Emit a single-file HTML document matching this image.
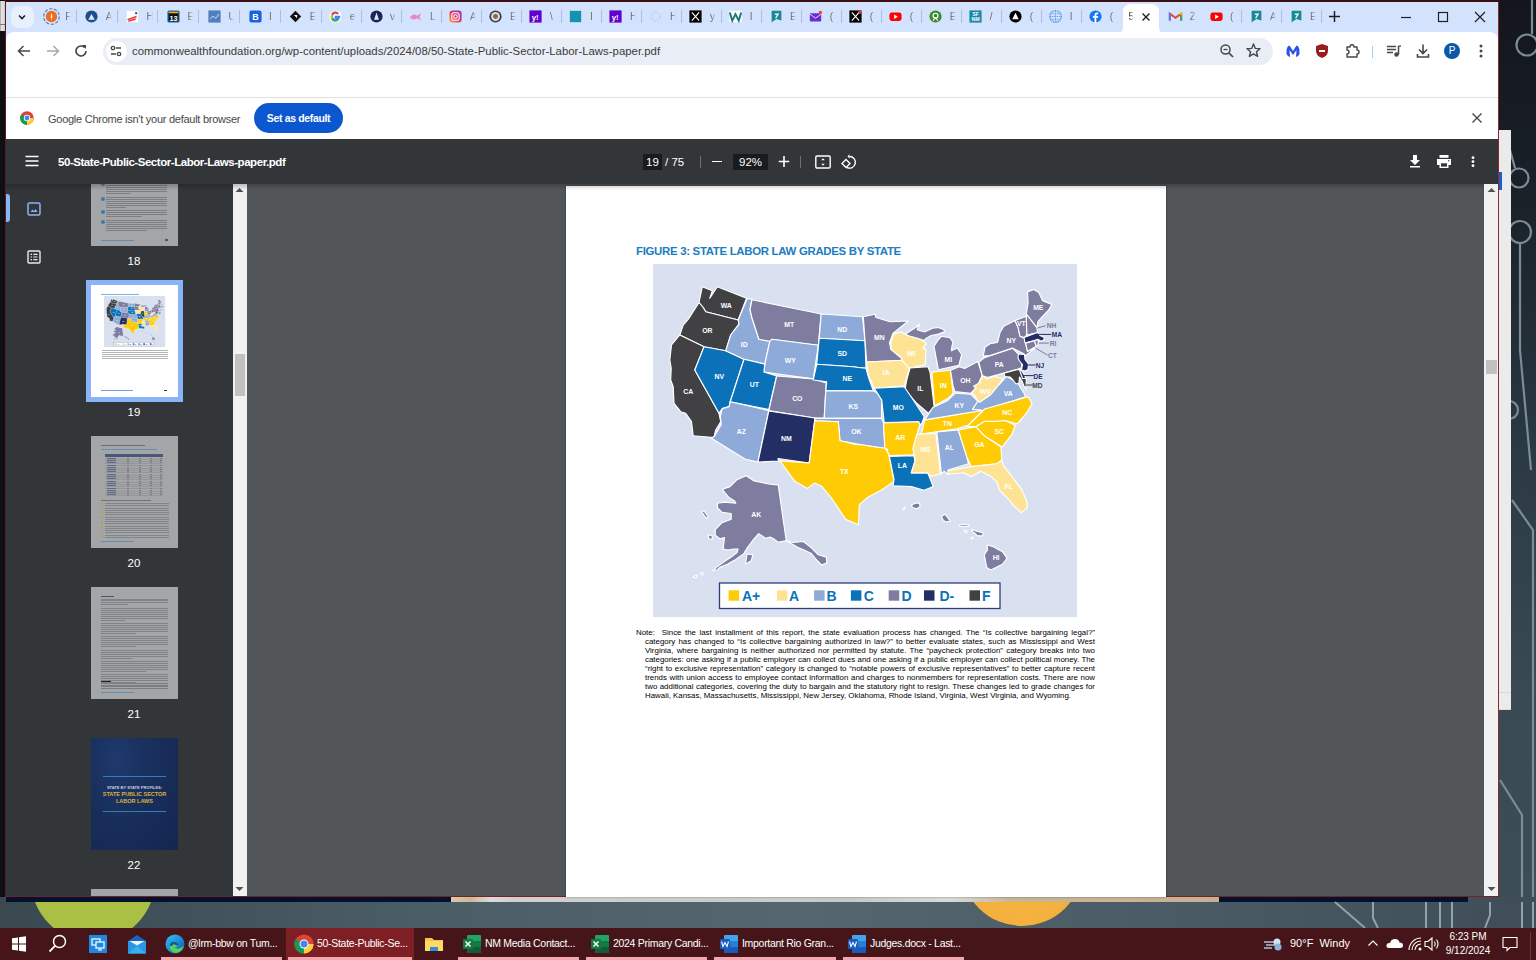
<!DOCTYPE html>
<html><head><meta charset="utf-8">
<style>
*{margin:0;padding:0;box-sizing:border-box}
html,body{width:1536px;height:960px;overflow:hidden;background:#3c4b55;font-family:"Liberation Sans",sans-serif}
.a{position:absolute}
svg.a{overflow:visible}
</style></head><body>
<svg width="0" height="0" style="position:absolute"><defs><symbol id="mapsym" viewBox="653 264 424 353">
<rect x="653" y="264" width="424" height="353" fill="#d9e1f1"/>
<g stroke="#fff" stroke-width="1.15" stroke-linejoin="round">
<path d="M702.3 286.7 L712.3 290.8 L709.8 298.3 L717.3 286.7 L746.5 298.3 L738.2 320.0 L705.7 311.7 L703.2 307.5 L699.0 302.5 Z" fill="#414143"/>
<path d="M699.0 302.5 L703.2 307.5 L705.7 311.7 L738.2 320.0 L739.0 324.2 L730.7 335.0 L725.7 350.8 L704.0 346.7 L679.8 335.0 L683.2 325.0 L689.0 318.3 Z" fill="#414143"/>
<path d="M679.8 335.0 L704.0 346.7 L694.8 370.0 L719.0 413.3 L720.7 421.7 L715.7 430.0 L714.0 437.5 L693.2 435.8 L691.5 421.7 L685.7 413.3 L680.7 411.7 L674.0 403.3 L673.2 386.7 L670.7 380.0 L671.2 368.0 L669.8 360.0 L671.5 345.0 Z" fill="#414143"/>
<path d="M704.0 346.7 L725.7 350.8 L744.0 359.2 L730.2 401.7 L729.2 406.6 L722.3 408.6 L719.0 413.3 L694.8 370.0 Z" fill="#0b72ba"/>
<path d="M747.0 298.8 L752.0 298.8 L750.0 309.7 L752.0 318.0 L758.9 339.3 L769.8 341.3 L764.8 364.1 L744.0 359.2 L725.7 350.8 L730.7 335.0 L739.0 324.2 L738.2 320.0 Z" fill="#8eaad8"/>
<path d="M752.0 299.8 L821.2 314.0 L818.3 345.3 L771.8 339.3 L769.8 341.3 L758.9 339.3 L752.0 318.0 L750.0 309.7 Z" fill="#7e7c9f"/>
<path d="M769.8 341.3 L771.8 339.3 L818.3 345.3 L813.3 378.9 L763.9 372.0 L764.8 364.1 Z" fill="#8eaad8"/>
<path d="M744.0 359.2 L764.8 364.1 L763.9 372.0 L776.7 376.0 L768.8 409.6 L730.2 401.7 Z" fill="#0b72ba"/>
<path d="M776.7 376.0 L813.3 378.9 L826.2 382.9 L824.2 418.0 L815.0 418.0 L768.8 410.6 Z" fill="#7e7c9f"/>
<path d="M730.2 401.7 L768.8 410.6 L757.9 462.0 L745.0 459.0 L711.4 438.3 L714.4 436.3 L721.3 424.4 L720.3 416.5 L722.3 408.6 L729.2 406.6 Z" fill="#8eaad8"/>
<path d="M768.8 411.0 L815.0 418.0 L809.2 463.0 L778.0 458.5 L778.5 461.0 L758.0 462.0 Z" fill="#232e65"/>
<path d="M821.2 314.0 L862.5 316.7 L865.0 340.8 L819.2 338.3 Z" fill="#8eaad8"/>
<path d="M819.2 338.3 L865.0 340.8 L865.8 363.3 L866.0 368.0 L858.3 367.5 L853.3 366.7 L816.7 364.2 Z" fill="#0b72ba"/>
<path d="M816.7 364.2 L853.3 366.7 L858.3 367.5 L866.0 368.3 L868.3 376.7 L873.3 390.8 L825.8 390.8 L826.7 381.7 L813.3 380.0 Z" fill="#0b72ba"/>
<path d="M825.8 390.8 L873.3 390.8 L877.5 393.3 L881.7 400.0 L881.5 418.3 L824.2 418.3 Z" fill="#8eaad8"/>
<path d="M815.0 418.3 L881.5 418.3 L883.5 423.0 L884.9 448.3 L863.3 445.0 L840.0 440.8 L838.3 421.7 L815.0 420.8 Z" fill="#8eaad8"/>
<path d="M814.7 420.8 L838.3 421.7 L840.0 440.8 L848.0 442.5 L855.0 444.5 L863.3 445.0 L872.0 446.5 L884.9 448.3 L887.6 451.9 L889.4 457.4 L894.0 481.1 L884.0 488.4 L867.5 497.5 L859.3 504.8 L858.4 524.8 L845.7 519.4 L831.1 497.5 L822.0 486.6 L814.7 482.9 L807.4 488.4 L794.6 481.1 L780.0 461.0 L809.2 462.9 Z" fill="#ffcb05"/>
<path d="M863.3 316.7 L875.0 314.2 L876.0 317.5 L890.0 321.7 L908.4 321.0 L893.1 333.3 L889.5 342.8 L890.9 349.4 L901.2 358.1 L901.9 360.3 L866.7 362.0 L865.0 340.8 Z" fill="#7e7c9f"/>
<path d="M890.9 342.1 L893.5 334.1 L901.2 331.9 L907.0 335.2 L920.8 339.2 L923.8 341.4 L926.7 343.6 L923.0 347.9 L926.0 349.4 L925.2 364.7 L909.2 368.4 L903.3 362.5 L901.2 357.4 L890.9 349.4 Z" fill="#fee394"/>
<path d="M866.7 362.0 L901.9 360.3 L909.2 368.4 L906.7 378.3 L904.2 385.8 L874.2 388.3 L868.3 375.0 Z" fill="#fee394"/>
<path d="M910.0 368.0 L928.0 366.7 L930.0 372.0 L934.2 406.7 L928.3 413.3 L916.7 403.3 L905.0 390.0 L906.7 380.0 Z" fill="#414143"/>
<path d="M931.9 372.1 L950.5 370.3 L953.1 393.3 L947.8 398.6 L934.5 405.7 Z" fill="#ffcb05"/>
<path d="M874.2 388.3 L904.2 386.7 L913.3 400.0 L924.2 416.7 L922.0 423.0 L920.0 425.0 L918.6 421.8 L884.2 422.5 L881.7 400.0 L877.5 393.3 Z" fill="#0b72ba"/>
<path d="M883.5 423.0 L918.6 421.8 L920.0 425.0 L916.7 435.0 L913.1 448.3 L914.0 454.7 L889.4 455.6 L887.6 451.9 L887.6 449.2 L884.9 448.3 Z" fill="#ffcb05"/>
<path d="M889.4 456.5 L914.0 455.6 L915.0 461.0 L911.3 472.9 L927.7 472.9 L933.2 486.6 L924.1 490.2 L911.3 486.6 L893.1 485.7 L894.0 479.3 Z" fill="#0b72ba"/>
<path d="M920.4 433.7 L935.9 433.7 L940.5 473.8 L931.3 476.5 L927.7 472.9 L911.3 472.9 L915.0 461.0 L913.1 448.3 L916.7 435.0 Z" fill="#fee394"/>
<path d="M936.8 431.9 L958.3 430.0 L967.1 457.7 L968.5 463.8 L948.1 470.0 L948.1 474.7 L944.1 471.3 L941.4 473.8 Z" fill="#8eaad8"/>
<path d="M958.3 430.0 L975.9 426.6 L984.7 436.1 L1001.0 446.9 L1001.7 460.5 L996.9 463.8 L971.2 466.6 L967.1 457.7 Z" fill="#ffcb05"/>
<path d="M975.9 426.6 L984.7 421.2 L995.6 421.2 L1005.0 420.5 L1015.2 425.2 L1011.8 434.7 L1002.3 446.9 L984.7 436.1 Z" fill="#ffcb05"/>
<path d="M948.1 470.6 L971.2 466.6 L996.9 463.8 L1001.7 460.5 L1003.7 465.9 L1013.2 478.1 L1021.3 488.9 L1026.7 501.1 L1027.4 507.9 L1021.3 512.6 L1013.2 505.2 L1006.4 497.0 L999.6 490.3 L996.9 482.1 L991.5 476.7 L980.7 471.3 L971.2 476.7 L964.4 472.7 L948.1 474.0 Z" fill="#fee394"/>
<path d="M921.3 434.1 L924.8 419.9 L983.2 410.2 L968.2 425.2 L956.7 428.8 Z" fill="#ffcb05"/>
<path d="M924.8 419.9 L932.8 407.5 L947.8 400.4 L954.9 393.3 L970.8 394.2 L977.9 401.3 L972.6 409.3 L983.2 410.2 Z" fill="#8eaad8"/>
<path d="M950.5 370.3 L959.3 366.8 L964.6 368.5 L977.9 361.5 L982.3 375.6 L976.1 388.0 L970.8 393.3 L954.9 391.6 L953.1 386.2 Z" fill="#7e7c9f"/>
<path d="M973.5 386.2 L979.7 382.7 L982.3 375.6 L986.8 379.2 L993.9 376.5 L1002.7 378.3 L999.2 384.5 L990.3 395.1 L979.7 402.2 L977.9 401.3 L974.4 395.1 L970.8 393.3 L976.1 388.0 Z" fill="#fee394"/>
<path d="M972.6 409.3 L977.9 401.3 L979.7 402.2 L990.3 395.1 L999.2 384.5 L1006.3 376.5 L1016.9 381.8 L1024.0 393.3 L1025.7 396.9 L983.2 410.2 Z" fill="#8eaad8"/>
<path d="M967.1 426.6 L984.7 409.0 L1028.1 396.8 L1032.1 403.6 L1026.7 413.0 L1017.2 423.9 L1005.0 420.5 L995.6 421.2 L984.7 421.2 L975.9 426.6 Z" fill="#ffcb05"/>
<path d="M906.6 333.3 L915.7 327.5 L919.4 324.2 L917.2 329.7 L924.5 331.9 L932.5 328.2 L938.4 327.5 L944.2 329.7 L944.2 331.9 L938.4 334.1 L931.1 335.5 L926.0 338.4 L923.8 340.6 L920.8 339.2 L907.0 335.2 Z" fill="#7e7c9f"/>
<path d="M941.3 336.3 L950.0 337.7 L952.9 342.1 L951.5 348.7 L951.5 350.8 L957.3 347.9 L961.7 354.5 L958.8 365.4 L938.4 369.8 L935.4 353.8 L934.0 346.5 L937.6 340.6 Z" fill="#7e7c9f"/>
<path d="M978.8 362.3 L984.1 357.9 L990.0 355.6 L1012.5 348.1 L1018.1 353.8 L1021.3 358.8 L1021.9 367.5 L1017.5 369.4 L990.0 376.9 L986.8 377.4 L982.3 375.6 Z" fill="#7e7c9f"/>
<path d="M983.2 356.1 L985.0 347.3 L990.0 343.8 L997.5 342.5 L1000.0 332.5 L1003.8 326.3 L1015.0 320.6 L1018.1 327.5 L1020.0 336.3 L1024.4 338.1 L1025.6 343.0 L1027.5 351.3 L1035.0 348.1 L1025.6 355.6 L1023.8 353.8 L1012.5 348.1 L990.0 355.6 Z" fill="#7e7c9f"/>
<path d="M1015.0 320.6 L1026.3 316.3 L1026.9 335.0 L1024.4 337.5 L1020.0 336.3 L1018.1 327.5 Z" fill="#7e7c9f"/>
<path d="M1026.3 313.8 L1036.9 327.5 L1037.5 332.5 L1026.9 335.0 L1026.3 316.3 Z" fill="#7e7c9f"/>
<path d="M1027.5 291.9 L1033.8 289.4 L1038.8 292.5 L1042.5 300.6 L1051.9 304.4 L1048.8 310.0 L1042.5 316.3 L1038.1 321.3 L1036.9 327.5 L1026.3 313.8 L1028.1 302.5 Z" fill="#7e7c9f"/>
<path d="M1024.0 337.5 L1037.5 332.5 L1040.0 335.5 L1044.5 337.5 L1043.5 340.5 L1040.0 341.0 L1038.5 339.5 L1025.0 343.0 Z" fill="#232e65"/>
<path d="M1025.6 343.1 L1034.4 340.6 L1036.3 346.3 L1027.5 351.3 Z" fill="#7e7c9f"/>
<path d="M1034.4 340.6 L1038.1 339.4 L1038.1 345.0 L1036.3 346.3 Z" fill="#7e7c9f"/>
<path d="M1018.5 354.0 L1024.5 354.5 L1025.0 359.5 L1028.5 364.0 L1028.0 369.5 L1025.0 371.0 L1021.5 370.0 L1022.5 364.5 L1019.5 361.0 L1018.0 358.0 Z" fill="#232e65"/>
<path d="M1003.8 373.1 L1018.0 369.4 L1020.6 370.0 L1022.0 374.0 L1026.3 378.8 L1026.0 389.0 L1024.0 386.0 L1022.0 381.0 L1019.5 377.0 L1019.0 383.0 L1016.0 384.0 L1013.0 380.0 L1010.0 377.0 L1005.0 376.5 Z" fill="#414143"/>
<path d="M1019.5 369.8 L1021.0 370.0 L1024.0 374.5 L1026.0 378.5 L1022.5 378.5 L1021.0 374.0 Z" fill="#232e65"/>
<path d="M723.2 488.9 L730.1 486.6 L737.0 479.7 L746.1 475.7 L754.2 480.9 L770.2 484.3 L778.2 484.9 L786.2 540.5 L778.2 542.2 L773.6 538.7 L770.2 537.0 L765.6 538.2 L761.0 535.3 L758.7 533.6 L754.2 538.7 L747.3 547.9 L743.8 553.6 L735.8 559.4 L727.8 564.0 L719.8 567.4 L717.5 569.7 L712.9 570.8 L716.3 567.4 L724.4 561.6 L731.2 557.1 L737.0 552.5 L738.1 549.0 L733.5 549.0 L728.0 550.0 L723.2 549.0 L724.4 537.6 L719.8 538.7 L715.2 535.3 L715.2 529.6 L722.1 522.7 L731.2 519.3 L731.2 513.5 L722.1 512.4 L717.5 507.8 L717.5 503.2 L724.4 502.1 L735.8 503.2 L734.7 500.9 L729.0 497.5 L723.2 490.6 Z" fill="#7e7c9f"/>
<path d="M786.2 540.5 L793.1 542.5 L803.4 541.5 L811.4 547.9 L818.3 554.8 L826.3 557.1 L826.9 562.8 L821.7 565.1 L817.2 560.5 L811.4 553.6 L804.6 550.2 L798.8 547.9 L790.8 543.3 Z" fill="#7e7c9f"/>
<path d="M747.0 554.0 L753.0 555.0 L751.0 561.0 L745.5 564.0 Z" fill="#7e7c9f"/>
<path d="M701.5 511.5 L704.0 511.0 L708.3 517.0 L706.0 518.0 Z" fill="#7e7c9f"/>
<path d="M708.0 535.0 L712.0 535.5 L712.5 539.0 L709.0 539.0 Z" fill="#7e7c9f"/>
<path d="M700.0 573.0 L703.0 572.5 L702.5 575.0 Z" fill="#7e7c9f"/>
<path d="M693.0 577.0 L697.0 575.0 L696.0 578.0 Z" fill="#7e7c9f"/>
<path d="M987.1 545.0 L993.3 546.7 L1002.5 551.7 L1007.1 558.3 L1002.5 564.2 L990.8 570.0 L986.7 567.5 L985.0 558.3 L984.2 555.0 L987.5 550.0 Z" fill="#7e7c9f"/>
<path d="M971.7 529.2 L975.0 530.8 L983.3 532.9 L982.5 535.8 L977.5 535.8 L975.0 533.3 L972.5 531.7 Z" fill="#7e7c9f"/>
<path d="M970.8 538.3 L973.3 537.1 L972.5 539.0 Z" fill="#7e7c9f"/>
<path d="M964.2 530.0 L967.5 531.3 L966.3 532.9 Z" fill="#7e7c9f"/>
<path d="M959.2 525.0 L964.2 524.2 L969.2 525.0 L968.3 526.3 L960.0 526.3 Z" fill="#7e7c9f"/>
<path d="M941.7 516.3 L945.0 514.2 L948.3 518.3 L950.4 521.3 L945.0 521.7 L942.5 519.2 Z" fill="#7e7c9f"/>
<path d="M911.7 505.0 L915.8 502.9 L919.6 503.3 L920.0 506.7 L916.7 508.8 L912.5 507.5 Z" fill="#7e7c9f"/>
<path d="M902.5 510.0 L905.0 507.1 L904.6 509.2 Z" fill="#7e7c9f"/>
</g>
<g font-family="Liberation Sans" font-weight="bold" font-size="6.9" fill="#fff" text-anchor="middle">
<text x="726.3" y="308.0">WA</text>
<text x="707.3" y="333.0">OR</text>
<text x="688.3" y="394.0">CA</text>
<text x="719.3" y="379.0">NV</text>
<text x="744.3" y="347.0">ID</text>
<text x="789.3" y="327.0">MT</text>
<text x="790.3" y="363.0">WY</text>
<text x="754.3" y="387.0">UT</text>
<text x="797.3" y="401.0">CO</text>
<text x="741.3" y="434.0">AZ</text>
<text x="786.3" y="441.0">NM</text>
<text x="842.3" y="332.0">ND</text>
<text x="842.3" y="356.0">SD</text>
<text x="847.3" y="381.0">NE</text>
<text x="853.3" y="409.0">KS</text>
<text x="856.3" y="434.0">OK</text>
<text x="844.3" y="474.0">TX</text>
<text x="879.3" y="340.0">MN</text>
<text x="886.3" y="375.0">IA</text>
<text x="898.3" y="410.0">MO</text>
<text x="900.3" y="440.0">AR</text>
<text x="902.3" y="468.0">LA</text>
<text x="911.3" y="356.0">WI</text>
<text x="920.3" y="391.0">IL</text>
<text x="925.3" y="452.0">MS</text>
<text x="948.3" y="362.0">MI</text>
<text x="943.3" y="388.0">IN</text>
<text x="959.3" y="408.0">KY</text>
<text x="947.3" y="426.0">TN</text>
<text x="949.3" y="450.0">AL</text>
<text x="965.3" y="383.0">OH</text>
<text x="979.3" y="447.0">GA</text>
<text x="1008.8" y="489.0">FL</text>
<text x="999.3" y="434.0">SC</text>
<text x="1007.3" y="415.0">NC</text>
<text x="985.3" y="394.0">WV</text>
<text x="1008.3" y="396.0">VA</text>
<text x="999.3" y="367.0">PA</text>
<text x="1011.3" y="343.0">NY</text>
<text x="1021.3" y="326.0">VT</text>
<text x="1038.3" y="310.0">ME</text>
<text x="756.3" y="517.0">AK</text>
<text x="996.1" y="559.7">HI</text>
</g>
<g font-family="Liberation Sans" font-weight="bold" font-size="6.6" text-anchor="middle" stroke-width="1">
<path d="M1037.5 328.1 L1045.6 325.6" stroke="#7b7a9c"/>
<text x="1051.5" y="328.1" fill="#7b7a9c">NH</text>
<path d="M1038.1 334.4 L1051.3 334.4" stroke="#232e65"/>
<text x="1057.0" y="337.3" fill="#232e65">MA</text>
<path d="M1038.8 343.1 L1048.8 343.1" stroke="#7b7a9c"/>
<text x="1053.0" y="346.3" fill="#7b7a9c">RI</text>
<path d="M1035.6 348.1 L1047.5 355.0" stroke="#7b7a9c"/>
<text x="1052.5" y="357.9" fill="#7b7a9c">CT</text>
<path d="M1027.5 365.0 L1035.6 365.0" stroke="#232e65"/>
<text x="1040.0" y="367.9" fill="#232e65">NJ</text>
<path d="M1023.1 375.6 L1033.8 375.6" stroke="#232e65"/>
<text x="1038.1" y="378.6" fill="#232e65">DE</text>
<path d="M1025.6 385.0 L1032.5 385.0" stroke="#414143"/>
<text x="1037.5" y="387.9" fill="#414143">MD</text>
</g>
<rect x="719.5" y="583" width="280.5" height="25.5" fill="#fff" stroke="#2f3c78" stroke-width="1.3"/>
<rect x="728.6" y="590.3" width="10.5" height="10.4" fill="#ffcb05"/>
<text x="742.0" y="601" font-family="Liberation Sans" font-weight="bold" font-size="14" fill="#0b72ba">A+</text>
<rect x="776.9" y="590.3" width="10.5" height="10.4" fill="#fee394"/>
<text x="789.0" y="601" font-family="Liberation Sans" font-weight="bold" font-size="14" fill="#0b72ba">A</text>
<rect x="814.1" y="590.3" width="10.5" height="10.4" fill="#8eaad8"/>
<text x="826.6" y="601" font-family="Liberation Sans" font-weight="bold" font-size="14" fill="#0b72ba">B</text>
<rect x="850.9" y="590.3" width="10.5" height="10.4" fill="#0b72ba"/>
<text x="863.7" y="601" font-family="Liberation Sans" font-weight="bold" font-size="14" fill="#0b72ba">C</text>
<rect x="888.7" y="590.3" width="10.5" height="10.4" fill="#7e7c9f"/>
<text x="901.6" y="601" font-family="Liberation Sans" font-weight="bold" font-size="14" fill="#0b72ba">D</text>
<rect x="924.0" y="590.3" width="10.5" height="10.4" fill="#232e65"/>
<text x="939.5" y="601" font-family="Liberation Sans" font-weight="bold" font-size="14" fill="#0b72ba">D-</text>
<rect x="969.5" y="590.3" width="10.5" height="10.4" fill="#414143"/>
<text x="982.0" y="601" font-family="Liberation Sans" font-weight="bold" font-size="14" fill="#0b72ba">F</text>
</symbol></defs></svg>
<div class="a" style="left:0;top:0;width:6px;height:928px;background:#0e0f13"></div>
<div class="a" style="left:0;top:1px;width:5px;height:30px;background:linear-gradient(90deg,#9a9a9a 0,#e2e2e2 1.5px,#dcdcdc 4px,#bdbdbd 5px)"></div>
<div class="a" style="left:0;top:24px;width:5px;height:1px;background:#777"></div>
<div class="a" style="left:1498px;top:0;width:38px;height:928px;background:linear-gradient(180deg,#13161c 0,#1a2129 200px,#2a3942 450px,#3a4a54 700px,#3d4d57 928px)"></div>
<svg class="a" style="left:1498px;top:0" width="38" height="928" viewBox="1498 0 38 928">
<g fill="none" stroke="#7a8c96" stroke-width="2.2">
<path d="M1532 0 V34"/><circle cx="1527" cy="45" r="10.5"/>
<path d="M1510 150 L1515 168"/><circle cx="1519" cy="178" r="9.5"/>
<circle cx="1520" cy="232" r="11"/><path d="M1520 243 V350 L1531 470"/>
<circle cx="1509" cy="410" r="9"/>
<path d="M1512 500 L1533 530 V928"/>
<path d="M1500 780 L1522 815 V928"/>
</g></svg>
<div class="a" style="left:0;top:897px;width:1536px;height:31px;background:linear-gradient(90deg,#3a4850 0,#4a5c66 400px,#56666f 800px,#4a5a64 1200px,#3e4d57 1536px)"></div>
<div class="a" style="left:6px;top:897px;width:445px;height:5px;background:#02132e"></div>
<div class="a" style="left:451px;top:897px;width:768px;height:5px;background:linear-gradient(90deg,#d9c9a8 0,#cdb89a 20px,#dcdcdc 40px,#d0d0d0 60px,#c9c9c9 400px,#dadada 500px,#c8b596 560px,#c5b094 768px)"></div>
<div class="a" style="left:1219px;top:897px;width:249px;height:5px;background:#02132e"></div>
<div class="a" style="left:0;top:902px;width:300px;height:26px;overflow:hidden"><div class="a" style="left:31.3px;top:-84px;width:124px;height:124px;border-radius:62px;background:#a9c045"></div></div>
<div class="a" style="left:900px;top:902px;width:300px;height:26px;overflow:hidden"><div class="a" style="left:60.7px;top:-98px;width:122px;height:122px;border-radius:61px;background:radial-gradient(circle at 50% 70%,#f6b43f 0,#f3ae3c 60%,#d8922c 100%)"></div></div>
<svg class="a" style="left:1300px;top:902px" width="236" height="26" viewBox="1300 902 236 26"><g fill="none" stroke="#8fa3ad" stroke-width="2">
<path d="M1335 902 L1365 928"/><path d="M1373 902 V918 L1378 928"/><path d="M1426 902 V928"/><path d="M1440 902 V928"/><path d="M1452 902 V928"/><path d="M1490 902 V915 L1485 928"/><path d="M1522 902 V928"/><path d="M1533 902 V928"/></g></svg>
<div class="a" style="left:1499px;top:130px;width:12px;height:580px;background:#ebebeb;border-bottom:1px solid #dcdcdc"></div>
<div class="a" style="left:1499px;top:692px;width:12px;height:1px;background:#d8d8d8"></div>
<div class="a" style="left:1499px;top:172px;width:3px;height:18px;background:#1a5fd0"></div>
<div class="a" style="left:5px;top:1px;width:1px;height:896px;background:#5a1a1e"></div>
<div class="a" style="left:1498px;top:1px;width:1px;height:896px;background:#8a2a2e"></div>
<div class="a" style="left:5px;top:896px;width:1494px;height:1px;background:#7a1f24"></div>
<div class="a" style="left:5px;top:0;width:1494px;height:2px;background:#3a1014"></div>
<div class="a" style="left:6px;top:2px;width:1492px;height:40px;background:#d3e3fd"></div>
<div class="a" style="left:11px;top:6px;width:23px;height:22px;border-radius:7px;background:#e8f0fe"></div>
<svg class="a" style="left:16px;top:11px" width="12" height="12" viewBox="0 0 12 12"><path d="M3 4.5 L6 7.5 L9 4.5" fill="none" stroke="#1f1f1f" stroke-width="1.6"/></svg>
<svg class="a" style="left:44.8px;top:10px" width="13" height="13" viewBox="0 0 16 16"><circle cx="8" cy="8" r="9.6" fill="none" stroke="#5a7ab8" stroke-width="1.4" stroke-dasharray="4 2"/><circle cx="8" cy="8" r="7" fill="#ef6c23"/><path d="M8 3.5 L9 8 L8 12.5 L7 8Z" fill="#fff"/></svg>
<div class="a" style="left:65.2px;top:10px;width:6px;height:14px;overflow:hidden;font-size:10px;color:#707070;line-height:14px;-webkit-mask-image:linear-gradient(90deg,#000 30%,transparent)">F</div>
<div class="a" style="left:76.0px;top:10px;width:1px;height:12.5px;background:#a8c1ec"></div>
<svg class="a" style="left:85.2px;top:10px" width="13" height="13" viewBox="0 0 16 16"><circle cx="8" cy="8" r="7.5" fill="#1d4f8a"/><path d="M4 12 L8 5 L12 12Z" fill="#dfe8f3"/></svg>
<div class="a" style="left:105.7px;top:10px;width:6px;height:14px;overflow:hidden;font-size:10px;color:#707070;line-height:14px;-webkit-mask-image:linear-gradient(90deg,#000 30%,transparent)">A</div>
<div class="a" style="left:116.5px;top:10px;width:1px;height:12.5px;background:#a8c1ec"></div>
<svg class="a" style="left:126.0px;top:10px" width="13" height="13" viewBox="0 0 16 16"><rect x="1" y="1" width="14" height="14" fill="#fff"/><path d="M2 12 L13 8 M3 14 L12 11" stroke="#e53935" stroke-width="1.8"/><circle cx="12.5" cy="4" r="1.4" fill="#2a4fa8"/></svg>
<div class="a" style="left:146.5px;top:10px;width:6px;height:14px;overflow:hidden;font-size:10px;color:#707070;line-height:14px;-webkit-mask-image:linear-gradient(90deg,#000 30%,transparent)">H</div>
<div class="a" style="left:157.3px;top:10px;width:1px;height:12.5px;background:#a8c1ec"></div>
<svg class="a" style="left:166.9px;top:10px" width="13" height="13" viewBox="0 0 16 16"><rect x="0.5" y="0.5" width="15" height="15" rx="2" fill="#1565c0"/><rect x="2" y="2" width="12" height="12" fill="#111"/><text x="8" y="13" font-size="9" font-weight="bold" fill="#fff" text-anchor="middle" font-family="Liberation Sans">13</text><rect x="2" y="2" width="12" height="2" fill="#f4b400"/></svg>
<div class="a" style="left:187.4px;top:10px;width:6px;height:14px;overflow:hidden;font-size:10px;color:#707070;line-height:14px;-webkit-mask-image:linear-gradient(90deg,#000 30%,transparent)">E</div>
<div class="a" style="left:198.2px;top:10px;width:1px;height:12.5px;background:#a8c1ec"></div>
<svg class="a" style="left:207.9px;top:10px" width="13" height="13" viewBox="0 0 16 16"><rect x="0.5" y="0.5" width="15" height="15" fill="#4f7fbf"/><path d="M3 11 Q6 6 8 9 T13 5" stroke="#fff" fill="none" stroke-width="1"/></svg>
<div class="a" style="left:228.4px;top:10px;width:6px;height:14px;overflow:hidden;font-size:10px;color:#707070;line-height:14px;-webkit-mask-image:linear-gradient(90deg,#000 30%,transparent)">U</div>
<div class="a" style="left:239.2px;top:10px;width:1px;height:12.5px;background:#a8c1ec"></div>
<svg class="a" style="left:248.5px;top:10px" width="13" height="13" viewBox="0 0 16 16"><rect x="0.5" y="0.5" width="15" height="15" rx="2.5" fill="#1a62e0"/><text x="8" y="12.5" font-size="11" font-weight="bold" fill="#fff" text-anchor="middle" font-family="Liberation Sans">B</text></svg>
<div class="a" style="left:269.0px;top:10px;width:6px;height:14px;overflow:hidden;font-size:10px;color:#707070;line-height:14px;-webkit-mask-image:linear-gradient(90deg,#000 30%,transparent)">I</div>
<div class="a" style="left:279.8px;top:10px;width:1px;height:12.5px;background:#a8c1ec"></div>
<svg class="a" style="left:289.3px;top:10px" width="13" height="13" viewBox="0 0 16 16"><path d="M8 1 L15 8 L8 15 L1 8Z" fill="#111"/><path d="M6 6 L10 6 L10 10Z" fill="#fff"/></svg>
<div class="a" style="left:309.8px;top:10px;width:6px;height:14px;overflow:hidden;font-size:10px;color:#707070;line-height:14px;-webkit-mask-image:linear-gradient(90deg,#000 30%,transparent)">E</div>
<div class="a" style="left:320.6px;top:10px;width:1px;height:12.5px;background:#a8c1ec"></div>
<svg class="a" style="left:329.3px;top:10px" width="13" height="13" viewBox="0 0 16 16"><circle cx="8" cy="8" r="7.5" fill="#fff"/><path d="M14 8.2 H8 V10 H12 A4.5 4.5 0 1 1 11.2 4.7" fill="none" stroke="#4285f4" stroke-width="2.2"/><path d="M3.6 5.7 A4.5 4.5 0 0 1 11.2 4.7" fill="none" stroke="#ea4335" stroke-width="2.2"/><path d="M3.6 10.3 A4.5 4.5 0 0 1 3.6 5.7" fill="none" stroke="#fbbc05" stroke-width="2.2"/><path d="M11.9 11 A4.5 4.5 0 0 1 3.6 10.3" fill="none" stroke="#34a853" stroke-width="2.2"/></svg>
<div class="a" style="left:349.8px;top:10px;width:6px;height:14px;overflow:hidden;font-size:10px;color:#707070;line-height:14px;-webkit-mask-image:linear-gradient(90deg,#000 30%,transparent)">e</div>
<div class="a" style="left:360.6px;top:10px;width:1px;height:12.5px;background:#a8c1ec"></div>
<svg class="a" style="left:369.5px;top:10px" width="13" height="13" viewBox="0 0 16 16"><circle cx="8" cy="8" r="7.5" fill="#1b2557"/><path d="M8 3 L11 12 H5Z" fill="#e8e8f0"/></svg>
<div class="a" style="left:390.0px;top:10px;width:6px;height:14px;overflow:hidden;font-size:10px;color:#707070;line-height:14px;-webkit-mask-image:linear-gradient(90deg,#000 30%,transparent)">v</div>
<div class="a" style="left:400.8px;top:10px;width:1px;height:12.5px;background:#a8c1ec"></div>
<svg class="a" style="left:409.4px;top:10px" width="13" height="13" viewBox="0 0 16 16"><path d="M1 9 Q5 3 10 7 L15 4 L13 9 L15 13 L10 10 Q5 14 1 9Z" fill="#e48bc0"/></svg>
<div class="a" style="left:429.9px;top:10px;width:6px;height:14px;overflow:hidden;font-size:10px;color:#707070;line-height:14px;-webkit-mask-image:linear-gradient(90deg,#000 30%,transparent)">L</div>
<div class="a" style="left:440.8px;top:10px;width:1px;height:12.5px;background:#a8c1ec"></div>
<svg class="a" style="left:449.4px;top:10px" width="13" height="13" viewBox="0 0 16 16"><defs><linearGradient id="ig" x1="0" y1="1" x2="1" y2="0"><stop offset="0" stop-color="#fbb03b"/><stop offset=".5" stop-color="#e1306c"/><stop offset="1" stop-color="#833ab4"/></linearGradient></defs><rect x="0.5" y="0.5" width="15" height="15" rx="4" fill="url(#ig)"/><rect x="3.5" y="3.5" width="9" height="9" rx="2.5" fill="none" stroke="#fff" stroke-width="1.3"/><circle cx="8" cy="8" r="2.2" fill="none" stroke="#fff" stroke-width="1.3"/></svg>
<div class="a" style="left:469.9px;top:10px;width:6px;height:14px;overflow:hidden;font-size:10px;color:#707070;line-height:14px;-webkit-mask-image:linear-gradient(90deg,#000 30%,transparent)">A</div>
<div class="a" style="left:480.7px;top:10px;width:1px;height:12.5px;background:#a8c1ec"></div>
<svg class="a" style="left:489.4px;top:10px" width="13" height="13" viewBox="0 0 16 16"><circle cx="8" cy="8" r="7.5" fill="#2a3a6a"/><circle cx="8" cy="8" r="5.5" fill="#e8dcc0"/><circle cx="8" cy="8" r="3" fill="#7a6a50"/></svg>
<div class="a" style="left:509.9px;top:10px;width:6px;height:14px;overflow:hidden;font-size:10px;color:#707070;line-height:14px;-webkit-mask-image:linear-gradient(90deg,#000 30%,transparent)">E</div>
<div class="a" style="left:520.7px;top:10px;width:1px;height:12.5px;background:#a8c1ec"></div>
<svg class="a" style="left:529.4px;top:10px" width="13" height="13" viewBox="0 0 16 16"><rect x="0.5" y="0.5" width="15" height="15" fill="#6001d2"/><text x="7.5" y="12" font-size="9.5" font-weight="bold" fill="#fff" text-anchor="middle" font-family="Liberation Sans">y!</text></svg>
<div class="a" style="left:549.9px;top:10px;width:6px;height:14px;overflow:hidden;font-size:10px;color:#707070;line-height:14px;-webkit-mask-image:linear-gradient(90deg,#000 30%,transparent)">\</div>
<div class="a" style="left:560.7px;top:10px;width:1px;height:12.5px;background:#a8c1ec"></div>
<svg class="a" style="left:569.4px;top:10px" width="13" height="13" viewBox="0 0 16 16"><rect x="1" y="1" width="14" height="14" fill="#1593ad"/></svg>
<div class="a" style="left:589.9px;top:10px;width:6px;height:14px;overflow:hidden;font-size:10px;color:#707070;line-height:14px;-webkit-mask-image:linear-gradient(90deg,#000 30%,transparent)">I</div>
<div class="a" style="left:600.7px;top:10px;width:1px;height:12.5px;background:#a8c1ec"></div>
<svg class="a" style="left:609.4px;top:10px" width="13" height="13" viewBox="0 0 16 16"><rect x="0.5" y="0.5" width="15" height="15" fill="#6001d2"/><text x="7.5" y="12" font-size="9.5" font-weight="bold" fill="#fff" text-anchor="middle" font-family="Liberation Sans">y!</text></svg>
<div class="a" style="left:629.9px;top:10px;width:6px;height:14px;overflow:hidden;font-size:10px;color:#707070;line-height:14px;-webkit-mask-image:linear-gradient(90deg,#000 30%,transparent)">H</div>
<div class="a" style="left:640.7px;top:10px;width:1px;height:12.5px;background:#a8c1ec"></div>
<svg class="a" style="left:649.4px;top:10px" width="13" height="13" viewBox="0 0 16 16"><circle cx="8" cy="8" r="5.5" fill="none" stroke="#b9d3f5" stroke-width="2" stroke-dasharray="1.5 1"/></svg>
<div class="a" style="left:669.9px;top:10px;width:6px;height:14px;overflow:hidden;font-size:10px;color:#707070;line-height:14px;-webkit-mask-image:linear-gradient(90deg,#000 30%,transparent)">H</div>
<div class="a" style="left:680.7px;top:10px;width:1px;height:12.5px;background:#a8c1ec"></div>
<svg class="a" style="left:689.4px;top:10px" width="13" height="13" viewBox="0 0 16 16"><rect x="0.5" y="0.5" width="15" height="15" fill="#000"/><path d="M3.5 3 L12.5 13 M12.5 3 L3.5 13" stroke="#fff" stroke-width="1.4"/></svg>
<div class="a" style="left:709.9px;top:10px;width:6px;height:14px;overflow:hidden;font-size:10px;color:#707070;line-height:14px;-webkit-mask-image:linear-gradient(90deg,#000 30%,transparent)">y</div>
<div class="a" style="left:720.7px;top:10px;width:1px;height:12.5px;background:#a8c1ec"></div>
<svg class="a" style="left:729.2px;top:10px" width="13" height="13" viewBox="0 0 16 16"><rect x="0.5" y="1" width="15" height="14" fill="#fff"/><path d="M1 3 L4 13 L8 5 L12 13 L15 3" fill="none" stroke="#1a7a76" stroke-width="2.4"/></svg>
<div class="a" style="left:749.7px;top:10px;width:6px;height:14px;overflow:hidden;font-size:10px;color:#707070;line-height:14px;-webkit-mask-image:linear-gradient(90deg,#000 30%,transparent)">I</div>
<div class="a" style="left:760.5px;top:10px;width:1px;height:12.5px;background:#a8c1ec"></div>
<svg class="a" style="left:769.6px;top:10px" width="13" height="13" viewBox="0 0 16 16"><path d="M2 1 H14 V13 L8 11 L2 15Z" fill="#188a96"/><path d="M6 5 H10 L7 10" fill="none" stroke="#fff" stroke-width="1.5"/></svg>
<div class="a" style="left:790.1px;top:10px;width:6px;height:14px;overflow:hidden;font-size:10px;color:#707070;line-height:14px;-webkit-mask-image:linear-gradient(90deg,#000 30%,transparent)">E</div>
<div class="a" style="left:800.9px;top:10px;width:1px;height:12.5px;background:#a8c1ec"></div>
<svg class="a" style="left:809.3px;top:10px" width="13" height="13" viewBox="0 0 16 16"><rect x="1" y="4" width="14" height="10" rx="1" fill="#6a2ad8"/><path d="M1 5 L8 10 L15 5" fill="none" stroke="#fff" stroke-width="1"/><circle cx="14" cy="3" r="2.2" fill="#f04040"/></svg>
<div class="a" style="left:829.8px;top:10px;width:6px;height:14px;overflow:hidden;font-size:10px;color:#707070;line-height:14px;-webkit-mask-image:linear-gradient(90deg,#000 30%,transparent)">(</div>
<div class="a" style="left:840.6px;top:10px;width:1px;height:12.5px;background:#a8c1ec"></div>
<svg class="a" style="left:849.3px;top:10px" width="13" height="13" viewBox="0 0 16 16"><rect x="0.5" y="0.5" width="15" height="15" fill="#000"/><path d="M3.5 3 L12.5 13 M12.5 3 L3.5 13" stroke="#fff" stroke-width="1.4"/><circle cx="13.5" cy="2.5" r="2.2" fill="#f04040"/></svg>
<div class="a" style="left:869.8px;top:10px;width:6px;height:14px;overflow:hidden;font-size:10px;color:#707070;line-height:14px;-webkit-mask-image:linear-gradient(90deg,#000 30%,transparent)">(</div>
<div class="a" style="left:880.6px;top:10px;width:1px;height:12.5px;background:#a8c1ec"></div>
<svg class="a" style="left:889.3px;top:10px" width="13" height="13" viewBox="0 0 16 16"><rect x="0.5" y="3" width="15" height="10.5" rx="3" fill="#ff0000"/><path d="M6.3 5.5 L11 8.2 L6.3 11Z" fill="#fff"/></svg>
<div class="a" style="left:909.8px;top:10px;width:6px;height:14px;overflow:hidden;font-size:10px;color:#707070;line-height:14px;-webkit-mask-image:linear-gradient(90deg,#000 30%,transparent)">(</div>
<div class="a" style="left:920.6px;top:10px;width:1px;height:12.5px;background:#a8c1ec"></div>
<svg class="a" style="left:929.3px;top:10px" width="13" height="13" viewBox="0 0 16 16"><circle cx="8" cy="8" r="7.5" fill="#3d8b2f"/><circle cx="8" cy="7" r="3" fill="none" stroke="#fff" stroke-width="1.5"/><path d="M5 13 L8 9.5 L11 13" fill="none" stroke="#fff" stroke-width="1.3"/></svg>
<div class="a" style="left:949.8px;top:10px;width:6px;height:14px;overflow:hidden;font-size:10px;color:#707070;line-height:14px;-webkit-mask-image:linear-gradient(90deg,#000 30%,transparent)">E</div>
<div class="a" style="left:960.6px;top:10px;width:1px;height:12.5px;background:#a8c1ec"></div>
<svg class="a" style="left:969.2px;top:10px" width="13" height="13" viewBox="0 0 16 16"><rect x="0.5" y="0.5" width="15" height="15" fill="#1b8aa6"/><text x="8" y="7" font-size="6" font-weight="bold" fill="#fff" text-anchor="middle" font-family="Liberation Sans">SF</text><text x="8" y="14" font-size="6.5" font-weight="bold" fill="#fff" text-anchor="middle" font-family="Liberation Sans">NM</text></svg>
<div class="a" style="left:989.8px;top:10px;width:6px;height:14px;overflow:hidden;font-size:10px;color:#707070;line-height:14px;-webkit-mask-image:linear-gradient(90deg,#000 30%,transparent)">/</div>
<div class="a" style="left:1000.5px;top:10px;width:1px;height:12.5px;background:#a8c1ec"></div>
<svg class="a" style="left:1009.2px;top:10px" width="13" height="13" viewBox="0 0 16 16"><circle cx="8" cy="8" r="7.5" fill="#000"/><path d="M8 3.5 L12 11.5 H4Z" fill="#fff"/></svg>
<div class="a" style="left:1029.7px;top:10px;width:6px;height:14px;overflow:hidden;font-size:10px;color:#707070;line-height:14px;-webkit-mask-image:linear-gradient(90deg,#000 30%,transparent)">(</div>
<div class="a" style="left:1040.5px;top:10px;width:1px;height:12.5px;background:#a8c1ec"></div>
<svg class="a" style="left:1049.2px;top:10px" width="13" height="13" viewBox="0 0 16 16"><circle cx="8" cy="8" r="7" fill="none" stroke="#5a9be8" stroke-width="2" stroke-dasharray="1.3 0.8"/><path d="M1.5 8 H14.5 M8 1.5 V14.5 M3 4.5 H13 M3 11.5 H13" stroke="#5a9be8" stroke-width="1.1" stroke-dasharray="1.3 0.8"/></svg>
<div class="a" style="left:1069.7px;top:10px;width:6px;height:14px;overflow:hidden;font-size:10px;color:#707070;line-height:14px;-webkit-mask-image:linear-gradient(90deg,#000 30%,transparent)">I</div>
<div class="a" style="left:1080.5px;top:10px;width:1px;height:12.5px;background:#a8c1ec"></div>
<svg class="a" style="left:1089.2px;top:10px" width="13" height="13" viewBox="0 0 16 16"><circle cx="8" cy="8" r="7.5" fill="#1877f2"/><path d="M9 16 V9.5 H11 L11.3 7.3 H9 V6.2 Q9 5.2 10 5.2 H11.4 V3.3 Q10.5 3.1 9.7 3.1 Q6.8 3.1 6.8 6 V7.3 H4.8 V9.5 H6.8 V16Z" fill="#fff"/></svg>
<div class="a" style="left:1109.7px;top:10px;width:6px;height:14px;overflow:hidden;font-size:10px;color:#707070;line-height:14px;-webkit-mask-image:linear-gradient(90deg,#000 30%,transparent)">(</div>
<svg class="a" style="left:1114.7px;top:4px" width="52" height="30" viewBox="0 0 52 30"><path d="M0 30 Q8 30 8 23 L8 8 Q8 0 16 0 L36 0 Q44 0 44 8 L44 23 Q44 30 52 30 Z" fill="#fff"/></svg>
<div class="a" style="left:1128.5px;top:10px;width:5px;height:14px;overflow:hidden;font-size:10px;color:#333;line-height:14px;-webkit-mask-image:linear-gradient(90deg,#000 20%,transparent)">5</div>
<svg class="a" style="left:1140px;top:11px" width="12" height="12" viewBox="0 0 12 12"><path d="M2.5 2.5 L9.5 9.5 M9.5 2.5 L2.5 9.5" stroke="#1f1f1f" stroke-width="1.4"/></svg>
<svg class="a" style="left:1169.3px;top:10px" width="13" height="13" viewBox="0 0 16 16"><path d="M1 13 V4.5 L8 9.5 L15 4.5 V13" fill="none" stroke="#ea4335" stroke-width="2.4"/><path d="M1 13 V4" stroke="#4285f4" stroke-width="2.4"/><path d="M15 13 V4" stroke="#34a853" stroke-width="2.4"/><path d="M13 5.5 L15 4 V6" stroke="#fbbc04" stroke-width="2"/></svg>
<div class="a" style="left:1189.8px;top:10px;width:6px;height:14px;overflow:hidden;font-size:10px;color:#707070;line-height:14px;-webkit-mask-image:linear-gradient(90deg,#000 30%,transparent)">Z</div>
<svg class="a" style="left:1209.5px;top:10px" width="13" height="13" viewBox="0 0 16 16"><rect x="0.5" y="3" width="15" height="10.5" rx="3" fill="#ff0000"/><path d="M6.3 5.5 L11 8.2 L6.3 11Z" fill="#fff"/></svg>
<div class="a" style="left:1230.0px;top:10px;width:6px;height:14px;overflow:hidden;font-size:10px;color:#707070;line-height:14px;-webkit-mask-image:linear-gradient(90deg,#000 30%,transparent)">(</div>
<div class="a" style="left:1240.8px;top:10px;width:1px;height:12.5px;background:#a8c1ec"></div>
<svg class="a" style="left:1249.5px;top:10px" width="13" height="13" viewBox="0 0 16 16"><path d="M2 1 H14 V13 L8 11 L2 15Z" fill="#188a96"/><path d="M6 5 H10 L7 10" fill="none" stroke="#fff" stroke-width="1.5"/></svg>
<div class="a" style="left:1270.0px;top:10px;width:6px;height:14px;overflow:hidden;font-size:10px;color:#707070;line-height:14px;-webkit-mask-image:linear-gradient(90deg,#000 30%,transparent)">A</div>
<div class="a" style="left:1280.8px;top:10px;width:1px;height:12.5px;background:#a8c1ec"></div>
<svg class="a" style="left:1289.5px;top:10px" width="13" height="13" viewBox="0 0 16 16"><path d="M2 1 H14 V13 L8 11 L2 15Z" fill="#188a96"/><path d="M6 5 H10 L7 10" fill="none" stroke="#fff" stroke-width="1.5"/></svg>
<div class="a" style="left:1310.0px;top:10px;width:6px;height:14px;overflow:hidden;font-size:10px;color:#707070;line-height:14px;-webkit-mask-image:linear-gradient(90deg,#000 30%,transparent)">E</div>
<div class="a" style="left:1320.8px;top:10px;width:1px;height:12.5px;background:#a8c1ec"></div>
<svg class="a" style="left:1327px;top:9px" width="15" height="15" viewBox="0 0 15 15"><path d="M7.5 2 V13 M2 7.5 H13" stroke="#1f1f1f" stroke-width="1.5"/></svg>
<svg class="a" style="left:1398px;top:9px" width="16" height="16" viewBox="0 0 16 16"><path d="M3 8.5 H13" stroke="#1f1f1f" stroke-width="1.2"/></svg>
<svg class="a" style="left:1435px;top:9px" width="16" height="16" viewBox="0 0 16 16"><rect x="3.5" y="3.5" width="9" height="9" fill="none" stroke="#1f1f1f" stroke-width="1.2"/></svg>
<svg class="a" style="left:1472px;top:9px" width="16" height="16" viewBox="0 0 16 16"><path d="M3 3 L13 13 M13 3 L3 13" stroke="#1f1f1f" stroke-width="1.2"/></svg>
<div class="a" style="left:6px;top:32px;width:1492px;height:65px;background:#fff;border-radius:8px 8px 0 0"></div>
<svg class="a" style="left:16px;top:43px" width="16" height="16" viewBox="0 0 16 16"><path d="M14 8 H2.5 M7.5 3 L2.5 8 L7.5 13" fill="none" stroke="#474747" stroke-width="1.5"/></svg>
<svg class="a" style="left:45px;top:43px" width="16" height="16" viewBox="0 0 16 16"><path d="M2 8 H13.5 M8.5 3 L13.5 8 L8.5 13" fill="none" stroke="#a8a8a8" stroke-width="1.5"/></svg>
<svg class="a" style="left:73px;top:43px" width="16" height="16" viewBox="0 0 16 16"><path d="M13 8 A5 5 0 1 1 11.5 4.4" fill="none" stroke="#474747" stroke-width="1.6"/><path d="M9 2 H13 V6Z" fill="#474747"/></svg>
<div class="a" style="left:103px;top:38px;width:1170px;height:27px;border-radius:14px;background:#e9eef6"></div>
<div class="a" style="left:106px;top:41px;width:21px;height:21px;border-radius:11px;background:#fff"></div>
<svg class="a" style="left:108px;top:43px" width="16" height="16" viewBox="0 0 16 16"><circle cx="5" cy="5" r="1.7" fill="none" stroke="#474747" stroke-width="1.3"/><path d="M8 5 H13" stroke="#474747" stroke-width="1.5"/><path d="M3 11 H8" stroke="#474747" stroke-width="1.5"/><circle cx="11" cy="11" r="1.7" fill="none" stroke="#474747" stroke-width="1.3"/></svg>
<div class="a" style="left:132px;top:43px;font-size:11.4px;line-height:16px;color:#3a3a3a;white-space:nowrap" id="url">commonwealthfoundation.org/wp-content/uploads/2024/08/50-State-Public-Sector-Labor-Laws-paper.pdf</div>
<svg class="a" style="left:1219px;top:43px" width="16" height="16" viewBox="0 0 16 16"><circle cx="6.5" cy="6.5" r="4.5" fill="none" stroke="#474747" stroke-width="1.5"/><path d="M9.8 9.8 L14 14" stroke="#474747" stroke-width="1.7"/><path d="M4.5 6.5 H8.5" stroke="#474747" stroke-width="1.3"/></svg>
<svg class="a" style="left:1245px;top:42px" width="17" height="17" viewBox="0 0 17 17"><path d="M8.5 2 L10.3 6.4 L15 6.7 L11.4 9.7 L12.6 14.3 L8.5 11.8 L4.4 14.3 L5.6 9.7 L2 6.7 L6.7 6.4Z" fill="none" stroke="#474747" stroke-width="1.4" stroke-linejoin="round"/></svg>
<svg class="a" style="left:1285px;top:43px" width="16" height="16" viewBox="0 0 16 16"><path d="M1.5 11 Q1 3 4.5 2.5 L8 8 L11.5 2.5 Q15 3 14.5 11 Q13 14 11 14 L11.5 7 L8 12 L4.5 7 L5 14 Q3 14 1.5 11Z" fill="#2c50e8"/></svg>
<svg class="a" style="left:1314px;top:43px" width="16" height="16" viewBox="0 0 16 16"><path d="M8 1 L14 3 V8 Q14 13 8 15 Q2 13 2 8 V3Z" fill="#9b1c1c"/><rect x="5" y="7" width="6" height="2" fill="#fff"/></svg>
<svg class="a" style="left:1344px;top:43px" width="16" height="16" viewBox="0 0 16 16"><path d="M3 4 H6 Q6 1.8 8 1.8 Q10 1.8 10 4 H13 V7 Q15 7 15 9 Q15 11 13 11 V14 H3 V11 Q5 11 5 9 Q5 7 3 7Z" fill="none" stroke="#474747" stroke-width="1.4" stroke-linejoin="round"/></svg>
<div class="a" style="left:1372px;top:46px;width:1px;height:12px;background:#a8c7fa"></div>
<svg class="a" style="left:1386px;top:43px" width="16" height="16" viewBox="0 0 16 16"><path d="M1 3.5 H10 M1 6.5 H10 M1 9.5 H7" stroke="#474747" stroke-width="1.5"/><path d="M12.5 3 V11.5" stroke="#474747" stroke-width="1.5"/><path d="M12.5 3 H15" stroke="#474747" stroke-width="1.3"/><circle cx="10.5" cy="11.5" r="2.2" fill="#474747"/></svg>
<svg class="a" style="left:1415px;top:43px" width="16" height="16" viewBox="0 0 16 16"><path d="M8 1.5 V10 M4 6.5 L8 10.5 L12 6.5" fill="none" stroke="#474747" stroke-width="1.6"/><path d="M2.5 11 V14 H13.5 V11" fill="none" stroke="#474747" stroke-width="1.6"/></svg>
<div class="a" style="left:1444px;top:43px;width:16px;height:16px;border-radius:8px;background:#0b57a8;color:#fff;font-size:10px;line-height:16px;text-align:center">P</div>
<svg class="a" style="left:1477px;top:43px" width="8" height="16" viewBox="0 0 8 16"><circle cx="4" cy="3" r="1.5" fill="#474747"/><circle cx="4" cy="8" r="1.5" fill="#474747"/><circle cx="4" cy="13" r="1.5" fill="#474747"/></svg>
<div class="a" style="left:6px;top:97px;width:1492px;height:1px;background:#e1e1e1"></div>
<div class="a" style="left:6px;top:98px;width:1492px;height:41px;background:#fff"></div>
<svg class="a" style="left:20px;top:111px" width="14" height="14" viewBox="0 0 14 14"><circle cx="7" cy="7" r="6.8" fill="#db4437"/><path d="M7 7 L1.1 3.6 A6.8 6.8 0 0 0 7 13.8Z" fill="#0f9d58"/><path d="M7 7 L13.8 7 A6.8 6.8 0 0 1 7 13.8 L7 7Z" fill="#ffcd40"/><circle cx="7" cy="7" r="3.2" fill="#fff"/><circle cx="7" cy="7" r="2.4" fill="#4285f4"/></svg>
<div class="a" style="left:48px;top:111.5px;font-size:11px;letter-spacing:-0.26px;line-height:14px;color:#474747;white-space:nowrap">Google Chrome isn't your default browser</div>
<div class="a" style="left:254px;top:103px;width:89px;height:30px;border-radius:15px;background:#0b57d0;color:#fff;font-size:10.5px;letter-spacing:-0.35px;font-weight:bold;line-height:30px;text-align:center">Set as default</div>
<svg class="a" style="left:1471px;top:112px" width="12" height="12" viewBox="0 0 12 12"><path d="M1.5 1.5 L10.5 10.5 M10.5 1.5 L1.5 10.5" stroke="#474747" stroke-width="1.4"/></svg>
<div class="a" style="left:6px;top:139px;width:1492px;height:45px;background:#323639"></div>
<svg class="a" style="left:25px;top:154px" width="14" height="14" viewBox="0 0 14 14"><path d="M0.5 2.5 H13.5 M0.5 7 H13.5 M0.5 11.5 H13.5" stroke="#fff" stroke-width="1.5"/></svg>
<div class="a" style="left:58px;top:155px;font-size:11.5px;letter-spacing:-0.45px;font-weight:bold;line-height:15px;color:#fff;white-space:nowrap">50-State-Public-Sector-Labor-Laws-paper.pdf</div>
<div class="a" style="left:643px;top:154px;width:19px;height:16px;background:#191b1c"></div>
<div class="a" style="left:643px;top:154px;width:19px;font-size:11.5px;line-height:16px;color:#fff;text-align:center">19</div>
<div class="a" style="left:665px;top:154px;font-size:11.5px;line-height:16px;color:#fff;white-space:nowrap">/ 75</div>
<div class="a" style="left:700px;top:156px;width:1px;height:12px;background:#6e7174"></div>
<div class="a" style="left:712px;top:160.5px;width:10px;height:1.6px;background:#fff"></div>
<div class="a" style="left:733px;top:154px;width:35px;height:16px;background:#191b1c;font-size:11.5px;line-height:16px;color:#fff;text-align:center">92%</div>
<svg class="a" style="left:778px;top:155px" width="12" height="13" viewBox="0 0 12 13"><path d="M6 1 V12 M0.8 6.5 H11.2" stroke="#fff" stroke-width="1.6"/></svg>
<div class="a" style="left:800px;top:156px;width:1px;height:12px;background:#6e7174"></div>
<svg class="a" style="left:815px;top:155px" width="16" height="14" viewBox="0 0 16 14"><rect x="0.8" y="1" width="14.4" height="12" rx="1.2" fill="none" stroke="#fff" stroke-width="1.4"/><path d="M8 3.2 L9.8 5.2 H6.2Z M8 10.8 L9.8 8.8 H6.2Z" fill="#fff"/></svg>
<svg class="a" style="left:841px;top:154px" width="16" height="15" viewBox="0 0 16 15"><path d="M8.5 2.5 A5.8 5.8 0 1 1 6 13.5" fill="none" stroke="#fff" stroke-width="1.4"/><path d="M8.5 0.3 L6.5 2.5 L8.5 4.6Z" fill="#fff"/><path d="M5 5.5 L9 9.5 L5 13.5 L1 9.5Z" fill="none" stroke="#fff" stroke-width="1.4"/></svg>
<svg class="a" style="left:1409px;top:154px" width="12" height="15" viewBox="0 0 12 15"><path d="M4 1 H8 V6 H11 L6 11 L1 6 H4Z" fill="#fff"/><rect x="1" y="12" width="10" height="1.5" fill="#fff"/></svg>
<svg class="a" style="left:1436px;top:154px" width="16" height="15" viewBox="0 0 16 15"><rect x="3.5" y="1" width="9" height="2.8" fill="#fff"/><path d="M1 5 H15 V11 H12.5 V14 H3.5 V11 H1Z" fill="#fff"/><rect x="5" y="9.3" width="6" height="3.3" fill="#323639"/><circle cx="12.8" cy="6.8" r="0.7" fill="#323639"/></svg>
<svg class="a" style="left:1469px;top:155px" width="8" height="14" viewBox="0 0 8 14"><circle cx="4" cy="2.7" r="1.4" fill="#fff"/><circle cx="4" cy="6.6" r="1.4" fill="#fff"/><circle cx="4" cy="10.7" r="1.4" fill="#fff"/></svg>
<div class="a" style="left:6px;top:184px;width:227px;height:712px;background:#323639"></div>
<div class="a" style="left:6.3px;top:193.5px;width:3.5px;height:28.5px;background:#8ab4f8;border-radius:0 3px 3px 0"></div>
<svg class="a" style="left:27px;top:201.5px" width="14" height="14" viewBox="0 0 14 14"><rect x="1" y="1" width="12" height="12" rx="1.5" fill="none" stroke="#8ab4f8" stroke-width="1.5"/><path d="M3.5 10 L5.5 7.5 L7 9 L8.5 7 L10.5 10Z" fill="#8ab4f8"/></svg>
<svg class="a" style="left:27px;top:250px" width="14" height="14" viewBox="0 0 14 14"><rect x="1" y="1" width="12" height="12" rx="1" fill="none" stroke="#e8eaed" stroke-width="1.4"/><path d="M3.5 4.3 H5 M6.3 4.3 H10.5 M3.5 7 H5 M6.3 7 H10.5 M3.5 9.7 H5 M6.3 9.7 H10.5" stroke="#e8eaed" stroke-width="1.2"/></svg>
<div class="a" style="left:91px;top:184px;width:87px;height:61.5px;background:#a3a5a7;overflow:hidden">
<div class="a" style="left:10px;top:-2.0px;width:4px;height:4px;border-radius:2px;background:#3a7bb0"></div>
<div class="a" style="left:15.2px;top:-1.0px;width:61.0px;height:0.9px;background:#7c7e83"></div><div class="a" style="left:15.2px;top:0.9px;width:61.0px;height:0.9px;background:#7c7e83"></div><div class="a" style="left:15.2px;top:2.9px;width:61.0px;height:0.9px;background:#7c7e83"></div><div class="a" style="left:15.2px;top:4.8px;width:61.0px;height:0.9px;background:#7c7e83"></div><div class="a" style="left:15.2px;top:6.8px;width:61.0px;height:0.9px;background:#7c7e83"></div><div class="a" style="left:15.2px;top:8.8px;width:24.1px;height:0.9px;background:#7c7e83"></div>
<div class="a" style="left:10px;top:12.6px;width:4px;height:4px;border-radius:2px;background:#3a7bb0"></div>
<div class="a" style="left:15.2px;top:13.3px;width:61.0px;height:0.9px;background:#7c7e83"></div><div class="a" style="left:15.2px;top:15.2px;width:61.0px;height:0.9px;background:#7c7e83"></div><div class="a" style="left:15.2px;top:17.2px;width:61.0px;height:0.9px;background:#7c7e83"></div><div class="a" style="left:15.2px;top:19.1px;width:61.0px;height:0.9px;background:#7c7e83"></div><div class="a" style="left:15.2px;top:21.1px;width:61.0px;height:0.9px;background:#7c7e83"></div><div class="a" style="left:15.2px;top:23.1px;width:20.0px;height:0.9px;background:#7c7e83"></div>
<div class="a" style="left:10px;top:26.0px;width:4px;height:4px;border-radius:2px;background:#3a7bb0"></div>
<div class="a" style="left:15.2px;top:26.4px;width:61.0px;height:0.9px;background:#7c7e83"></div><div class="a" style="left:15.2px;top:28.3px;width:61.0px;height:0.9px;background:#7c7e83"></div><div class="a" style="left:15.2px;top:30.3px;width:61.0px;height:0.9px;background:#7c7e83"></div><div class="a" style="left:15.2px;top:32.2px;width:36.0px;height:0.9px;background:#7c7e83"></div>
<div class="a" style="left:10px;top:35.7px;width:4px;height:4px;border-radius:2px;background:#3a7bb0"></div>
<div class="a" style="left:15.2px;top:36.4px;width:61.0px;height:0.9px;background:#7c7e83"></div><div class="a" style="left:15.2px;top:38.4px;width:61.0px;height:0.9px;background:#7c7e83"></div><div class="a" style="left:15.2px;top:40.3px;width:61.0px;height:0.9px;background:#7c7e83"></div><div class="a" style="left:15.2px;top:42.2px;width:61.0px;height:0.9px;background:#7c7e83"></div><div class="a" style="left:15.2px;top:44.2px;width:61.0px;height:0.9px;background:#7c7e83"></div><div class="a" style="left:15.2px;top:46.1px;width:40.8px;height:0.9px;background:#7c7e83"></div>
<div class="a" style="left:10px;top:55.5px;width:33px;height:1px;background:#5f8fb8"></div>
<div class="a" style="left:74px;top:55px;width:3px;height:1.5px;background:#4a5068"></div>
</div>
<div class="a" style="left:114px;top:254px;width:40px;text-align:center;font-size:11.5px;line-height:14px;color:#fff">18</div>
<div class="a" style="left:86px;top:280px;width:97px;height:122px;background:#8ab4f8"></div>
<div class="a" style="left:91px;top:285px;width:87px;height:112px;background:#fff;overflow:hidden">
<div class="a" style="left:10px;top:9px;width:38px;height:1px;background:#7ab4e4"></div>
<svg class="a" style="left:12.7px;top:11.3px" width="61.5" height="51.2" viewBox="0 0 424 353"><use href="#mapsym" x="0" y="0" width="424" height="353"/></svg>
<div class="a" style="left:10.5px;top:64.5px;width:66.0px;height:0.8px;background:#b4b4b4"></div><div class="a" style="left:10.5px;top:66.5px;width:66.0px;height:0.8px;background:#b4b4b4"></div><div class="a" style="left:10.5px;top:68.5px;width:66.0px;height:0.8px;background:#b4b4b4"></div><div class="a" style="left:10.5px;top:70.5px;width:66.0px;height:0.8px;background:#b4b4b4"></div><div class="a" style="left:10.5px;top:72.5px;width:66.0px;height:0.8px;background:#b4b4b4"></div>
<div class="a" style="left:10px;top:105px;width:32px;height:1px;background:#6aa6dc"></div><div class="a" style="left:73px;top:105px;width:3px;height:1px;background:#335"></div>
</div>
<div class="a" style="left:114px;top:405px;width:40px;text-align:center;font-size:11.5px;line-height:14px;color:#fff">19</div>
<div class="a" style="left:91px;top:436px;width:87px;height:112px;background:#a3a5a7;overflow:hidden">
<div class="a" style="left:10px;top:8.5px;width:44px;height:1px;background:#6c6e74"></div>
<div class="a" style="left:10px;top:12.5px;width:56px;height:1px;background:#6a8fb4"></div>
<div class="a" style="left:14px;top:18px;width:58px;height:2.5px;background:#4a5778"></div>
<div class="a" style="left:14px;top:22.5px;width:58px;height:0.7px;background:#94969a"></div>
<div class="a" style="left:16px;top:21.6px;width:9px;height:1px;background:#5e6a88"></div>
<div class="a" style="left:36px;top:21.6px;width:2px;height:0.8px;background:#7a7c82"></div>
<div class="a" style="left:48px;top:21.6px;width:2px;height:0.8px;background:#7a7c82"></div>
<div class="a" style="left:59px;top:21.6px;width:2px;height:0.8px;background:#7a7c82"></div>
<div class="a" style="left:69px;top:21.6px;width:2px;height:0.8px;background:#7a7c82"></div>
<div class="a" style="left:14px;top:24.8px;width:58px;height:0.7px;background:#94969a"></div>
<div class="a" style="left:16px;top:23.9px;width:9px;height:1px;background:#5e6a88"></div>
<div class="a" style="left:36px;top:23.9px;width:2px;height:0.8px;background:#7a7c82"></div>
<div class="a" style="left:48px;top:23.9px;width:2px;height:0.8px;background:#7a7c82"></div>
<div class="a" style="left:59px;top:23.9px;width:2px;height:0.8px;background:#7a7c82"></div>
<div class="a" style="left:69px;top:23.9px;width:2px;height:0.8px;background:#7a7c82"></div>
<div class="a" style="left:14px;top:27.1px;width:58px;height:0.7px;background:#94969a"></div>
<div class="a" style="left:16px;top:26.2px;width:9px;height:1px;background:#5e6a88"></div>
<div class="a" style="left:36px;top:26.2px;width:2px;height:0.8px;background:#7a7c82"></div>
<div class="a" style="left:48px;top:26.2px;width:2px;height:0.8px;background:#7a7c82"></div>
<div class="a" style="left:59px;top:26.2px;width:2px;height:0.8px;background:#7a7c82"></div>
<div class="a" style="left:69px;top:26.2px;width:2px;height:0.8px;background:#7a7c82"></div>
<div class="a" style="left:14px;top:29.4px;width:58px;height:0.7px;background:#94969a"></div>
<div class="a" style="left:16px;top:28.5px;width:9px;height:1px;background:#5e6a88"></div>
<div class="a" style="left:36px;top:28.5px;width:2px;height:0.8px;background:#7a7c82"></div>
<div class="a" style="left:48px;top:28.5px;width:2px;height:0.8px;background:#7a7c82"></div>
<div class="a" style="left:59px;top:28.5px;width:2px;height:0.8px;background:#7a7c82"></div>
<div class="a" style="left:69px;top:28.5px;width:2px;height:0.8px;background:#7a7c82"></div>
<div class="a" style="left:14px;top:31.7px;width:58px;height:0.7px;background:#94969a"></div>
<div class="a" style="left:16px;top:30.8px;width:9px;height:1px;background:#5e6a88"></div>
<div class="a" style="left:36px;top:30.8px;width:2px;height:0.8px;background:#7a7c82"></div>
<div class="a" style="left:48px;top:30.8px;width:2px;height:0.8px;background:#7a7c82"></div>
<div class="a" style="left:59px;top:30.8px;width:2px;height:0.8px;background:#7a7c82"></div>
<div class="a" style="left:69px;top:30.8px;width:2px;height:0.8px;background:#7a7c82"></div>
<div class="a" style="left:14px;top:34.0px;width:58px;height:0.7px;background:#94969a"></div>
<div class="a" style="left:16px;top:33.1px;width:9px;height:1px;background:#5e6a88"></div>
<div class="a" style="left:36px;top:33.1px;width:2px;height:0.8px;background:#7a7c82"></div>
<div class="a" style="left:48px;top:33.1px;width:2px;height:0.8px;background:#7a7c82"></div>
<div class="a" style="left:59px;top:33.1px;width:2px;height:0.8px;background:#7a7c82"></div>
<div class="a" style="left:69px;top:33.1px;width:2px;height:0.8px;background:#7a7c82"></div>
<div class="a" style="left:14px;top:36.3px;width:58px;height:0.7px;background:#94969a"></div>
<div class="a" style="left:16px;top:35.4px;width:9px;height:1px;background:#5e6a88"></div>
<div class="a" style="left:36px;top:35.4px;width:2px;height:0.8px;background:#7a7c82"></div>
<div class="a" style="left:48px;top:35.4px;width:2px;height:0.8px;background:#7a7c82"></div>
<div class="a" style="left:59px;top:35.4px;width:2px;height:0.8px;background:#7a7c82"></div>
<div class="a" style="left:69px;top:35.4px;width:2px;height:0.8px;background:#7a7c82"></div>
<div class="a" style="left:14px;top:38.6px;width:58px;height:0.7px;background:#94969a"></div>
<div class="a" style="left:16px;top:37.7px;width:9px;height:1px;background:#5e6a88"></div>
<div class="a" style="left:36px;top:37.7px;width:2px;height:0.8px;background:#7a7c82"></div>
<div class="a" style="left:48px;top:37.7px;width:2px;height:0.8px;background:#7a7c82"></div>
<div class="a" style="left:59px;top:37.7px;width:2px;height:0.8px;background:#7a7c82"></div>
<div class="a" style="left:69px;top:37.7px;width:2px;height:0.8px;background:#7a7c82"></div>
<div class="a" style="left:14px;top:40.9px;width:58px;height:0.7px;background:#94969a"></div>
<div class="a" style="left:16px;top:40.0px;width:9px;height:1px;background:#5e6a88"></div>
<div class="a" style="left:36px;top:40.0px;width:2px;height:0.8px;background:#7a7c82"></div>
<div class="a" style="left:48px;top:40.0px;width:2px;height:0.8px;background:#7a7c82"></div>
<div class="a" style="left:59px;top:40.0px;width:2px;height:0.8px;background:#7a7c82"></div>
<div class="a" style="left:69px;top:40.0px;width:2px;height:0.8px;background:#7a7c82"></div>
<div class="a" style="left:14px;top:43.2px;width:58px;height:0.7px;background:#94969a"></div>
<div class="a" style="left:16px;top:42.3px;width:9px;height:1px;background:#5e6a88"></div>
<div class="a" style="left:36px;top:42.3px;width:2px;height:0.8px;background:#7a7c82"></div>
<div class="a" style="left:48px;top:42.3px;width:2px;height:0.8px;background:#7a7c82"></div>
<div class="a" style="left:59px;top:42.3px;width:2px;height:0.8px;background:#7a7c82"></div>
<div class="a" style="left:69px;top:42.3px;width:2px;height:0.8px;background:#7a7c82"></div>
<div class="a" style="left:14px;top:45.5px;width:58px;height:0.7px;background:#94969a"></div>
<div class="a" style="left:16px;top:44.6px;width:9px;height:1px;background:#5e6a88"></div>
<div class="a" style="left:36px;top:44.6px;width:2px;height:0.8px;background:#7a7c82"></div>
<div class="a" style="left:48px;top:44.6px;width:2px;height:0.8px;background:#7a7c82"></div>
<div class="a" style="left:59px;top:44.6px;width:2px;height:0.8px;background:#7a7c82"></div>
<div class="a" style="left:69px;top:44.6px;width:2px;height:0.8px;background:#7a7c82"></div>
<div class="a" style="left:14px;top:47.8px;width:58px;height:0.7px;background:#94969a"></div>
<div class="a" style="left:16px;top:46.9px;width:9px;height:1px;background:#5e6a88"></div>
<div class="a" style="left:36px;top:46.9px;width:2px;height:0.8px;background:#7a7c82"></div>
<div class="a" style="left:48px;top:46.9px;width:2px;height:0.8px;background:#7a7c82"></div>
<div class="a" style="left:59px;top:46.9px;width:2px;height:0.8px;background:#7a7c82"></div>
<div class="a" style="left:69px;top:46.9px;width:2px;height:0.8px;background:#7a7c82"></div>
<div class="a" style="left:14px;top:50.1px;width:58px;height:0.7px;background:#94969a"></div>
<div class="a" style="left:16px;top:49.2px;width:9px;height:1px;background:#5e6a88"></div>
<div class="a" style="left:36px;top:49.2px;width:2px;height:0.8px;background:#7a7c82"></div>
<div class="a" style="left:48px;top:49.2px;width:2px;height:0.8px;background:#7a7c82"></div>
<div class="a" style="left:59px;top:49.2px;width:2px;height:0.8px;background:#7a7c82"></div>
<div class="a" style="left:69px;top:49.2px;width:2px;height:0.8px;background:#7a7c82"></div>
<div class="a" style="left:14px;top:52.4px;width:58px;height:0.7px;background:#94969a"></div>
<div class="a" style="left:16px;top:51.5px;width:9px;height:1px;background:#5e6a88"></div>
<div class="a" style="left:36px;top:51.5px;width:2px;height:0.8px;background:#7a7c82"></div>
<div class="a" style="left:48px;top:51.5px;width:2px;height:0.8px;background:#7a7c82"></div>
<div class="a" style="left:59px;top:51.5px;width:2px;height:0.8px;background:#7a7c82"></div>
<div class="a" style="left:69px;top:51.5px;width:2px;height:0.8px;background:#7a7c82"></div>
<div class="a" style="left:14px;top:54.7px;width:58px;height:0.7px;background:#94969a"></div>
<div class="a" style="left:16px;top:53.8px;width:9px;height:1px;background:#5e6a88"></div>
<div class="a" style="left:36px;top:53.8px;width:2px;height:0.8px;background:#7a7c82"></div>
<div class="a" style="left:48px;top:53.8px;width:2px;height:0.8px;background:#7a7c82"></div>
<div class="a" style="left:59px;top:53.8px;width:2px;height:0.8px;background:#7a7c82"></div>
<div class="a" style="left:69px;top:53.8px;width:2px;height:0.8px;background:#7a7c82"></div>
<div class="a" style="left:14px;top:57.0px;width:58px;height:0.7px;background:#94969a"></div>
<div class="a" style="left:16px;top:56.1px;width:9px;height:1px;background:#5e6a88"></div>
<div class="a" style="left:36px;top:56.1px;width:2px;height:0.8px;background:#7a7c82"></div>
<div class="a" style="left:48px;top:56.1px;width:2px;height:0.8px;background:#7a7c82"></div>
<div class="a" style="left:59px;top:56.1px;width:2px;height:0.8px;background:#7a7c82"></div>
<div class="a" style="left:69px;top:56.1px;width:2px;height:0.8px;background:#7a7c82"></div>
<div class="a" style="left:14px;top:59.3px;width:58px;height:0.7px;background:#94969a"></div>
<div class="a" style="left:16px;top:58.4px;width:9px;height:1px;background:#5e6a88"></div>
<div class="a" style="left:36px;top:58.4px;width:2px;height:0.8px;background:#7a7c82"></div>
<div class="a" style="left:48px;top:58.4px;width:2px;height:0.8px;background:#7a7c82"></div>
<div class="a" style="left:59px;top:58.4px;width:2px;height:0.8px;background:#7a7c82"></div>
<div class="a" style="left:69px;top:58.4px;width:2px;height:0.8px;background:#7a7c82"></div>
<div class="a" style="left:10px;top:63.5px;width:50px;height:1px;background:#707278"></div>
<div class="a" style="left:10px;top:67.0px;width:2px;height:1.5px;background:#b8a040"></div>

<div class="a" style="left:10px;top:71.6px;width:2px;height:1.5px;background:#b8a040"></div>

<div class="a" style="left:10px;top:76.2px;width:2px;height:1.5px;background:#b8a040"></div>

<div class="a" style="left:10px;top:80.8px;width:2px;height:1.5px;background:#b8a040"></div>

<div class="a" style="left:10px;top:85.4px;width:2px;height:1.5px;background:#b8a040"></div>

<div class="a" style="left:10px;top:90.0px;width:2px;height:1.5px;background:#b8a040"></div>

<div class="a" style="left:10px;top:94.6px;width:2px;height:1.5px;background:#b8a040"></div>

<div class="a" style="left:10px;top:99.2px;width:2px;height:1.5px;background:#b8a040"></div>

<div class="a" style="left:14.0px;top:67.0px;width:64.0px;height:0.8px;background:#828489"></div><div class="a" style="left:14.0px;top:69.2px;width:64.0px;height:0.8px;background:#828489"></div><div class="a" style="left:14.0px;top:71.5px;width:64.0px;height:0.8px;background:#828489"></div><div class="a" style="left:14.0px;top:73.8px;width:64.0px;height:0.8px;background:#828489"></div><div class="a" style="left:14.0px;top:76.0px;width:64.0px;height:0.8px;background:#828489"></div><div class="a" style="left:14.0px;top:78.2px;width:64.0px;height:0.8px;background:#828489"></div><div class="a" style="left:14.0px;top:80.5px;width:64.0px;height:0.8px;background:#828489"></div><div class="a" style="left:14.0px;top:82.8px;width:64.0px;height:0.8px;background:#828489"></div><div class="a" style="left:14.0px;top:85.0px;width:64.0px;height:0.8px;background:#828489"></div><div class="a" style="left:14.0px;top:87.2px;width:64.0px;height:0.8px;background:#828489"></div><div class="a" style="left:14.0px;top:89.5px;width:64.0px;height:0.8px;background:#828489"></div><div class="a" style="left:14.0px;top:91.8px;width:64.0px;height:0.8px;background:#828489"></div><div class="a" style="left:14.0px;top:94.0px;width:64.0px;height:0.8px;background:#828489"></div><div class="a" style="left:14.0px;top:96.2px;width:64.0px;height:0.8px;background:#828489"></div><div class="a" style="left:14.0px;top:98.5px;width:64.0px;height:0.8px;background:#828489"></div><div class="a" style="left:14.0px;top:100.8px;width:64.0px;height:0.8px;background:#828489"></div>
<div class="a" style="left:10px;top:104.5px;width:33px;height:1px;background:#5f8fb8"></div>
</div>
<div class="a" style="left:114px;top:556px;width:40px;text-align:center;font-size:11.5px;line-height:14px;color:#fff">20</div>
<div class="a" style="left:91px;top:587px;width:87px;height:112px;background:#a3a5a7;overflow:hidden">
<div class="a" style="left:10px;top:8.5px;width:13px;height:1.2px;background:#4a5580"></div>
<div class="a" style="left:10.0px;top:11.5px;width:67.0px;height:0.8px;background:#808287"></div><div class="a" style="left:10.0px;top:13.4px;width:67.0px;height:0.8px;background:#808287"></div><div class="a" style="left:10.0px;top:15.4px;width:67.0px;height:0.8px;background:#808287"></div><div class="a" style="left:10.0px;top:17.4px;width:27.4px;height:0.8px;background:#808287"></div>
<div class="a" style="left:10.0px;top:20.9px;width:67.0px;height:0.8px;background:#808287"></div><div class="a" style="left:10.0px;top:22.8px;width:67.0px;height:0.8px;background:#808287"></div><div class="a" style="left:10.0px;top:24.8px;width:67.0px;height:0.8px;background:#808287"></div><div class="a" style="left:10.0px;top:26.8px;width:67.0px;height:0.8px;background:#808287"></div><div class="a" style="left:10.0px;top:28.7px;width:67.0px;height:0.8px;background:#808287"></div><div class="a" style="left:10.0px;top:30.6px;width:67.0px;height:0.8px;background:#808287"></div><div class="a" style="left:10.0px;top:32.6px;width:23.7px;height:0.8px;background:#808287"></div>
<div class="a" style="left:10.0px;top:36.1px;width:67.0px;height:0.8px;background:#808287"></div><div class="a" style="left:10.0px;top:38.1px;width:67.0px;height:0.8px;background:#808287"></div><div class="a" style="left:10.0px;top:40.0px;width:67.0px;height:0.8px;background:#808287"></div><div class="a" style="left:10.0px;top:42.0px;width:67.0px;height:0.8px;background:#808287"></div><div class="a" style="left:10.0px;top:43.9px;width:67.0px;height:0.8px;background:#808287"></div><div class="a" style="left:10.0px;top:45.9px;width:34.5px;height:0.8px;background:#808287"></div>
<div class="a" style="left:10.0px;top:49.4px;width:67.0px;height:0.8px;background:#808287"></div><div class="a" style="left:10.0px;top:51.4px;width:67.0px;height:0.8px;background:#808287"></div><div class="a" style="left:10.0px;top:53.3px;width:67.0px;height:0.8px;background:#808287"></div><div class="a" style="left:10.0px;top:55.3px;width:67.0px;height:0.8px;background:#808287"></div><div class="a" style="left:10.0px;top:57.2px;width:67.0px;height:0.8px;background:#808287"></div><div class="a" style="left:10.0px;top:59.2px;width:35.1px;height:0.8px;background:#808287"></div>
<div class="a" style="left:10.0px;top:62.7px;width:67.0px;height:0.8px;background:#808287"></div><div class="a" style="left:10.0px;top:64.7px;width:67.0px;height:0.8px;background:#808287"></div><div class="a" style="left:10.0px;top:66.6px;width:67.0px;height:0.8px;background:#808287"></div><div class="a" style="left:10.0px;top:68.6px;width:67.0px;height:0.8px;background:#808287"></div><div class="a" style="left:10.0px;top:70.5px;width:30.9px;height:0.8px;background:#808287"></div>
<div class="a" style="left:10.0px;top:74.1px;width:67.0px;height:0.8px;background:#808287"></div><div class="a" style="left:10.0px;top:76.0px;width:67.0px;height:0.8px;background:#808287"></div><div class="a" style="left:10.0px;top:78.0px;width:67.0px;height:0.8px;background:#808287"></div><div class="a" style="left:10.0px;top:79.9px;width:67.0px;height:0.8px;background:#808287"></div><div class="a" style="left:10.0px;top:81.9px;width:67.0px;height:0.8px;background:#808287"></div><div class="a" style="left:10.0px;top:83.8px;width:45.3px;height:0.8px;background:#808287"></div>
<div class="a" style="left:10.0px;top:87.4px;width:67.0px;height:0.8px;background:#808287"></div><div class="a" style="left:10.0px;top:89.3px;width:67.0px;height:0.8px;background:#808287"></div><div class="a" style="left:10.0px;top:91.3px;width:67.0px;height:0.8px;background:#808287"></div><div class="a" style="left:10.0px;top:93.2px;width:67.0px;height:0.8px;background:#808287"></div><div class="a" style="left:10.0px;top:95.2px;width:34.7px;height:0.8px;background:#808287"></div>
<div class="a" style="left:10px;top:93.5px;width:10px;height:1px;background:#222"></div>
<div class="a" style="left:10.0px;top:96.0px;width:67.0px;height:0.7px;background:#7a7c80"></div><div class="a" style="left:10.0px;top:97.7px;width:67.0px;height:0.7px;background:#7a7c80"></div><div class="a" style="left:10.0px;top:99.4px;width:67.0px;height:0.7px;background:#7a7c80"></div><div class="a" style="left:10.0px;top:101.1px;width:67.0px;height:0.7px;background:#7a7c80"></div>
<div class="a" style="left:10px;top:104.5px;width:33px;height:1px;background:#5f8fb8"></div>
</div>
<div class="a" style="left:114px;top:707px;width:40px;text-align:center;font-size:11.5px;line-height:14px;color:#fff">21</div>
<div class="a" style="left:91px;top:738px;width:87px;height:112px;background:radial-gradient(ellipse at 30% 20%,#1f3a6e 0,#192f5c 40%,#142650 100%);overflow:hidden">
<div class="a" style="left:12px;top:38px;width:63px;height:1px;background:#2f7fc0"></div>
<div class="a" style="left:12px;top:73px;width:63px;height:1px;background:#2f7fc0"></div>
<div class="a" style="left:0;top:47px;width:87px;text-align:center;font-size:4px;font-weight:bold;color:#c9cfe0;line-height:5px">STATE BY STATE PROFILES:</div>
<div class="a" style="left:0;top:53px;width:87px;text-align:center;font-size:5.5px;font-weight:bold;color:#d9b53a;line-height:6.5px">STATE PUBLIC SECTOR<br>LABOR LAWS</div>
</div>
<div class="a" style="left:114px;top:858px;width:40px;text-align:center;font-size:11.5px;line-height:14px;color:#fff">22</div>
<div class="a" style="left:91px;top:889px;width:87px;height:7px;background:#a3a5a7"></div>
<div class="a" style="left:233px;top:184px;width:14px;height:712px;background:#f1f1f1"></div>
<svg class="a" style="left:235px;top:186px" width="9" height="8" viewBox="0 0 9 8"><path d="M0.5 6 L4.5 2 L8.5 6Z" fill="#505050"/></svg>
<svg class="a" style="left:235px;top:885px" width="9" height="8" viewBox="0 0 9 8"><path d="M0.5 2 L4.5 6 L8.5 2Z" fill="#505050"/></svg>
<div class="a" style="left:234.5px;top:354px;width:10.5px;height:42px;background:#c1c1c1"></div>
<div class="a" style="left:247px;top:184px;width:1237px;height:712px;background:#525659"></div>
<div class="a" style="left:1484px;top:184px;width:14px;height:712px;background:#f1f1f1"></div>
<svg class="a" style="left:1486.5px;top:186px" width="9" height="8" viewBox="0 0 9 8"><path d="M0.5 6 L4.5 2 L8.5 6Z" fill="#505050"/></svg>
<svg class="a" style="left:1486.5px;top:885px" width="9" height="8" viewBox="0 0 9 8"><path d="M0.5 2 L4.5 6 L8.5 2Z" fill="#505050"/></svg>
<div class="a" style="left:1486px;top:360px;width:10.5px;height:14px;background:#c1c1c1"></div>
<div class="a" style="left:566px;top:186px;width:600px;height:711px;background:#fff;box-shadow:0 0 2px rgba(0,0,0,.4)"></div>
<div class="a" style="left:636px;top:244px;font-size:11.4px;letter-spacing:-0.29px;font-weight:bold;line-height:14px;color:#1a7cc1;white-space:nowrap">FIGURE 3: STATE LABOR LAW GRADES BY STATE</div>
<svg class="a" style="left:653px;top:264px" width="424" height="353" viewBox="0 0 424 353"><use href="#mapsym" x="0" y="0" width="424" height="353"/></svg>
<div class="a" id="note" style="left:636px;top:629.3px;width:459px;font-size:7.9px;line-height:8.93px;color:#000"><div style="text-align:justify;text-align-last:justify;white-space:nowrap;overflow:visible">Note:&nbsp; Since the last installment of this report, the state evaluation process has changed. The “Is collective bargaining legal?”</div><div style="padding-left:9px;text-align:justify;text-align-last:justify;white-space:nowrap;overflow:visible">category has changed to “Is collective bargaining authorized in law?” to better evaluate states, such as Mississippi and West</div><div style="padding-left:9px;text-align:justify;text-align-last:justify;white-space:nowrap;overflow:visible">Virginia, where bargaining is neither authorized nor permitted by statute. The “paycheck protection” category breaks into two</div><div style="padding-left:9px;text-align:justify;text-align-last:justify;white-space:nowrap;overflow:visible">categories: one asking if a public employer can collect dues and one asking if a public employer can collect political money. The</div><div style="padding-left:9px;text-align:justify;text-align-last:justify;white-space:nowrap;overflow:visible">“right to exclusive representation” category is changed to “notable powers of exclusive representatives” to better capture recent</div><div style="padding-left:9px;text-align:justify;text-align-last:justify;white-space:nowrap;overflow:visible">trends with union access to employee contact information and charges to nonmembers for representation costs. There are now</div><div style="padding-left:9px;text-align:justify;text-align-last:justify;white-space:nowrap;overflow:visible">two additional categories, covering the duty to bargain and the statutory right to resign. These changes led to grade changes for</div><div style="padding-left:9px;text-align:justify;text-align-last:left;white-space:nowrap;overflow:visible">Hawaii, Kansas, Massachusetts, Mississippi, New Jersey, Oklahoma, Rhode Island, Virginia, West Virginia, and Wyoming.</div></div>
<div class="a" style="left:6px;top:184px;width:1478px;height:6px;background:linear-gradient(180deg,rgba(0,0,0,.22),rgba(0,0,0,0))"></div>
<div class="a" style="left:0;top:928px;width:1536px;height:32px;background:#461519"></div>
<svg class="a" style="left:11px;top:936px" width="16" height="16" viewBox="0 0 16 16"><path d="M1 2.3 L7 1.4 V7.5 H1Z M8 1.3 L15 0.3 V7.5 H8Z M1 8.5 H7 V14.6 L1 13.7Z M8 8.5 H15 V15.7 L8 14.7Z" fill="#fff"/></svg>
<svg class="a" style="left:48px;top:934px" width="20" height="20" viewBox="0 0 20 20"><circle cx="11.5" cy="7.5" r="6" fill="none" stroke="#fff" stroke-width="1.5"/><path d="M7.3 11.7 L1.5 17.5" stroke="#fff" stroke-width="1.8"/></svg>
<svg class="a" style="left:88px;top:934px" width="20" height="20" viewBox="0 0 20 20"><rect x="1" y="1" width="18" height="18" fill="#1e88e5"/><rect x="4" y="5" width="8" height="6" fill="none" stroke="#fff" stroke-width="1.2"/><rect x="8" y="8" width="8" height="6" fill="#1e88e5" stroke="#fff" stroke-width="1.2"/><path d="M10 16 H14 M12 14 V16" stroke="#fff"/></svg>
<svg class="a" style="left:127px;top:934px" width="20" height="20" viewBox="0 0 20 20"><path d="M1 7 L10 1 L19 7Z" fill="#1466c2"/><rect x="1" y="7" width="18" height="12.5" fill="#2a96e4"/><path d="M1 19.5 L10 12 L19 19.5Z" fill="#36b0f0"/><path d="M2.5 7 H17.5 L10 11.5Z" fill="#f4f4f4"/></svg>
<svg class="a" style="left:165px;top:934px" width="20" height="20" viewBox="0 0 20 20"><defs><linearGradient id="eg" x1="0" y1="0" x2="1" y2="1"><stop offset="0" stop-color="#35c1f1"/><stop offset=".5" stop-color="#1e90d8"/><stop offset="1" stop-color="#0c59a4"/></linearGradient></defs><circle cx="10" cy="10" r="9.5" fill="url(#eg)"/><path d="M19 12 Q17 18 11 19 Q5 18 4.5 12 Q5 8 9 7.5 Q14 8 13 12 Q11 14 9 13 Q12 17 19 12Z" fill="#5ed05e"/><path d="M6 12 Q6 9 9 9 Q12 9 12 11.5" fill="none" stroke="#0c59a4" stroke-width="2.5"/></svg>
<div class="a" style="left:188px;top:936px;font-size:10.5px;letter-spacing:-0.3px;line-height:15px;color:#fff;white-space:nowrap">@lrm-bbw on Tum...</div>
<div class="a" style="left:286px;top:928px;width:128px;height:32px;background:#7e1f25"></div>
<svg class="a" style="left:294px;top:934px" width="20" height="20" viewBox="0 0 20 20"><circle cx="10" cy="10" r="9.6" fill="#db4437"/><path d="M10 10 L1.7 5.2 A9.6 9.6 0 0 0 10 19.6Z" fill="#0f9d58"/><path d="M10 10 L19.6 10 A9.6 9.6 0 0 1 10 19.6Z" fill="#ffcd40"/><circle cx="10" cy="10" r="4.5" fill="#fff"/><circle cx="10" cy="10" r="3.5" fill="#4285f4"/></svg>
<div class="a" style="left:317px;top:936px;font-size:10.5px;letter-spacing:-0.3px;line-height:15px;color:#fff;white-space:nowrap">50-State-Public-Se...</div>
<svg class="a" style="left:424px;top:934px" width="20" height="20" viewBox="0 0 20 20"><path d="M1 4 H8 L10 6 H19 V17 H1Z" fill="#f8c447"/><rect x="1" y="7" width="18" height="10" fill="#ffd866"/><rect x="6" y="13" width="8" height="4" fill="#2f8fd8"/></svg>
<svg class="a" style="left:462px;top:934px" width="20" height="20" viewBox="0 0 20 20"><rect x="5" y="1" width="14" height="18" rx="1" fill="#21a366"/><rect x="5" y="7" width="14" height="6" fill="#107c41"/><rect x="5" y="13" width="14" height="6" fill="#185c37"/><rect x="1" y="5" width="10" height="10" rx="1" fill="#107c41"/><path d="M3.5 7.5 L8.5 12.5 M8.5 7.5 L3.5 12.5" stroke="#fff" stroke-width="1.5"/></svg>
<div class="a" style="left:485px;top:936px;font-size:10.5px;letter-spacing:-0.3px;line-height:15px;color:#fff;white-space:nowrap">NM Media Contact...</div>
<svg class="a" style="left:590px;top:934px" width="20" height="20" viewBox="0 0 20 20"><rect x="5" y="1" width="14" height="18" rx="1" fill="#21a366"/><rect x="5" y="7" width="14" height="6" fill="#107c41"/><rect x="5" y="13" width="14" height="6" fill="#185c37"/><rect x="1" y="5" width="10" height="10" rx="1" fill="#107c41"/><path d="M3.5 7.5 L8.5 12.5 M8.5 7.5 L3.5 12.5" stroke="#fff" stroke-width="1.5"/></svg>
<div class="a" style="left:613px;top:936px;font-size:10.5px;letter-spacing:-0.3px;line-height:15px;color:#fff;white-space:nowrap">2024 Primary Candi...</div>
<svg class="a" style="left:719px;top:934px" width="20" height="20" viewBox="0 0 20 20"><rect x="5" y="1" width="14" height="18" rx="1" fill="#41a5ee"/><rect x="5" y="7" width="14" height="6" fill="#2b7cd3"/><rect x="5" y="13" width="14" height="6" fill="#185abd"/><rect x="1" y="5" width="10" height="10" rx="1" fill="#185abd"/><path d="M2.5 7.5 L4 12.5 L6 8.5 L8 12.5 L9.5 7.5" fill="none" stroke="#fff" stroke-width="1.1"/></svg>
<div class="a" style="left:742px;top:936px;font-size:10.5px;letter-spacing:-0.3px;line-height:15px;color:#fff;white-space:nowrap">Important Rio Gran...</div>
<svg class="a" style="left:847px;top:934px" width="20" height="20" viewBox="0 0 20 20"><rect x="5" y="1" width="14" height="18" rx="1" fill="#41a5ee"/><rect x="5" y="7" width="14" height="6" fill="#2b7cd3"/><rect x="5" y="13" width="14" height="6" fill="#185abd"/><rect x="1" y="5" width="10" height="10" rx="1" fill="#185abd"/><path d="M2.5 7.5 L4 12.5 L6 8.5 L8 12.5 L9.5 7.5" fill="none" stroke="#fff" stroke-width="1.1"/></svg>
<div class="a" style="left:870px;top:936px;font-size:10.5px;letter-spacing:-0.3px;line-height:15px;color:#fff;white-space:nowrap">Judges.docx  -  Last...</div>
<div class="a" style="left:161px;top:957px;width:121px;height:3px;background:#f2a8ad"></div>
<div class="a" style="left:288px;top:957px;width:124px;height:3px;background:#f2a8ad"></div>
<div class="a" style="left:458px;top:957px;width:121px;height:3px;background:#f2a8ad"></div>
<div class="a" style="left:586px;top:957px;width:121px;height:3px;background:#f2a8ad"></div>
<div class="a" style="left:714px;top:957px;width:122px;height:3px;background:#f2a8ad"></div>
<div class="a" style="left:843px;top:957px;width:121px;height:3px;background:#f2a8ad"></div>
<svg class="a" style="left:1263px;top:935px" width="20" height="18" viewBox="0 0 20 18"><path d="M1 7 H11 M3 10 H13 M1 13 H9" stroke="#a9c2d8" stroke-width="1.5"/><circle cx="14" cy="7" r="3.5" fill="#cfe3f4"/><circle cx="15" cy="12" r="3.5" fill="#8fb3d8"/></svg>
<div class="a" style="left:1290px;top:936px;font-size:11px;line-height:15px;color:#fff;white-space:nowrap">90°F&nbsp; Windy</div>
<svg class="a" style="left:1367px;top:937px" width="12" height="12" viewBox="0 0 12 12"><path d="M1.5 8.5 L6 4 L10.5 8.5" fill="none" stroke="#fff" stroke-width="1.2"/></svg>
<svg class="a" style="left:1386px;top:936px" width="18" height="14" viewBox="0 0 18 14"><path d="M3 12 Q0 12 0.5 9 Q1 6.5 4 7 Q5 3 9 3 Q13 3 13.5 6.5 Q17 6.5 17 9.5 Q17 12 14 12Z" fill="#fff"/></svg>
<svg class="a" style="left:1407px;top:936px" width="16" height="16" viewBox="0 0 16 16"><g fill="none" stroke="#fff" stroke-width="1.1"><path d="M2 14 A12 12 0 0 1 14 2"/><path d="M5 14 A9 9 0 0 1 14 5"/><path d="M8 14 A6 6 0 0 1 14 8"/></g><circle cx="13" cy="13" r="1.5" fill="#fff"/></svg>
<svg class="a" style="left:1424px;top:936px" width="18" height="16" viewBox="0 0 18 16"><path d="M1 5.5 H4 L8 2 V14 L4 10.5 H1Z" fill="none" stroke="#fff" stroke-width="1.1"/><path d="M10.5 5.5 Q12 8 10.5 10.5 M12.5 3.5 Q15.5 8 12.5 12.5" fill="none" stroke="#fff" stroke-width="1.1"/></svg>
<div class="a" style="left:1440px;top:930px;width:56px;text-align:center;font-size:10px;line-height:14px;color:#fff">6:23 PM<br>9/12/2024</div>
<svg class="a" style="left:1502px;top:936px" width="16" height="16" viewBox="0 0 16 16"><path d="M1 1.5 H15 V11.5 H8 L5 14.5 V11.5 H1Z" fill="none" stroke="#fff" stroke-width="1.1"/></svg>
<div class="a" style="left:1530px;top:932px;width:1px;height:28px;background:#6a3a3e"></div>
</body></html>
